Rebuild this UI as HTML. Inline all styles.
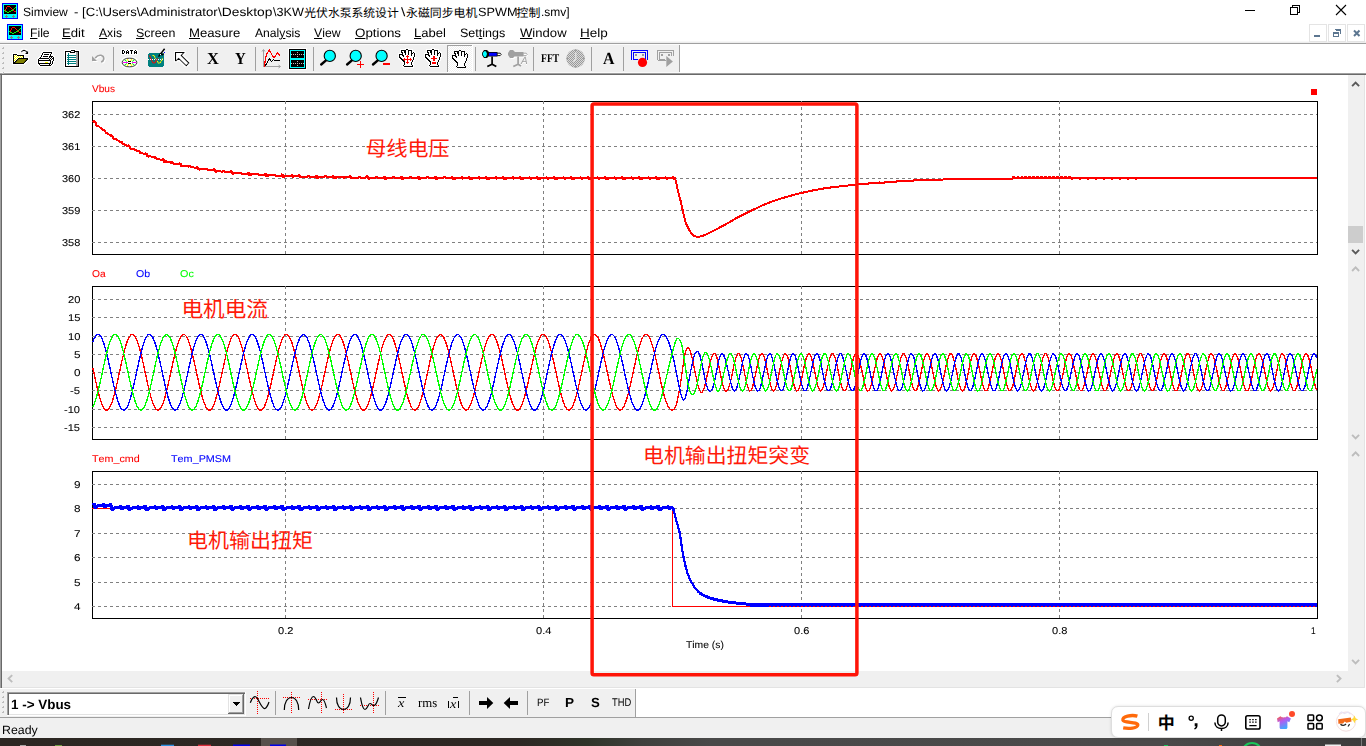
<!DOCTYPE html>
<html lang="en"><head><meta charset="utf-8"><title>Simview</title>
<style>
html,body{margin:0;padding:0;background:#fff;overflow:hidden}
body{width:1366px;height:746px;font-family:"Liberation Sans",sans-serif;font-kerning:none;text-rendering:geometricPrecision}
#app{position:relative;width:1366px;height:746px;overflow:hidden;background:#fff}
.b{position:absolute}
.t{position:absolute;white-space:pre;line-height:normal;transform-origin:0 0;font-kerning:none}
.t u{text-decoration:underline;text-underline-offset:1px;text-decoration-thickness:1px}
svg{position:absolute;left:0;top:0;overflow:visible}
.ic{position:absolute}
.ax{-webkit-text-stroke:.08px currentColor}
</style></head><body><div id="app">
<div class="b" id="titlebar" style="left:0;top:0;width:1366px;height:22px;background:#fff"></div>
<svg class="ic" style="left:2px;top:3px" width="16" height="16" viewBox="0 0 16 16" shape-rendering="crispEdges"><rect width="16" height="16" fill="#00f"/><rect x="1" y="1" width="14" height="14" fill="#0ff"/><rect x="2" y="2" width="12" height="9" fill="#000"/><path d="M3 6h1v2h-1zM4 4h1v2h-1zM5 3h3v1h-3zM8 4h1v1h-1zM9 5h1v1h-1zM10 6h1v1h-1zM11 7h1v1h-1zM12 8h2v1h-2z" fill="#f00"/><path d="M2 7h1v1h-1zM3 8h2v1h-2zM5 9h2v1h-2zM7 8h2v1h-2zM9 7h2v1h-2zM11 6h1v1h-1zM12 5h1v1h-1zM13 4h1v1h-1z" fill="#0f0"/><path d="M4 12h1v3h-1zM3 13h3v1h-3zM11 12h1v3h-1zM10 13h3v1h-3z" fill="#808080"/></svg>
<span class="t" style="left:23.15px;top:4.80px;font-size:12.0px;color:#000;transform:scaleX(1.0033)">Simview</span>
<span class="t" style="left:73.62px;top:4.80px;font-size:12.0px;color:#000;transform:scaleX(1.0923)">-</span>
<span class="t" style="left:82.26px;top:4.80px;font-size:12.0px;color:#000;transform:scaleX(1.0938)">[C:\Users\Administrator</span>
<span class="t" style="left:218.40px;top:4.80px;font-size:12.0px;color:#000;transform:scaleX(1.1483)">\Desktop</span>
<span class="t" style="left:272.90px;top:4.80px;font-size:12.0px;color:#000;transform:scaleX(1.0513)">\3KW</span>
<span class="t" style="left:400.60px;top:4.80px;font-size:12.0px;color:#000;transform:scaleX(1.2897)">\</span>
<span class="t" style="left:477.72px;top:4.80px;font-size:12.0px;color:#000;transform:scaleX(1.0586)">SPWM</span>
<span class="t" style="left:541.20px;top:4.80px;font-size:12.0px;color:#000;transform:scaleX(0.9995)">.smv]</span>
<svg width="1366" height="24" viewBox="0 0 1366 24"><text x="304.3" y="17" font-size="11.8" fill="#000" font-family="'Liberation Sans','Noto Sans CJK SC',sans-serif">光伏水泵系统设计</text><text x="406" y="17" font-size="11.9" fill="#000" font-family="'Liberation Sans','Noto Sans CJK SC',sans-serif">永磁同步电机</text><text x="516.5" y="17" font-size="11.9" fill="#000" font-family="'Liberation Sans','Noto Sans CJK SC',sans-serif">控制</text></svg>
<svg width="1366" height="22" viewBox="0 0 1366 22" fill="none" stroke="#000" stroke-width="1"><path d="M1245 10.5h10" shape-rendering="crispEdges"/><path d="M1290.5 7.5h7v7h-7zM1292.5 7.5v-2h7v7h-2" shape-rendering="crispEdges"/><path d="M1336 5l10 10M1346 5l-10 10" stroke-width="1.1"/></svg>
<div class="b" id="menubar" style="left:0;top:22px;width:1366px;height:21px;background:#fff"></div>
<div class="b" style="left:0px;top:41px;width:1366px;height:1px;background:#f7f7f7;"></div>
<div class="b" style="left:0px;top:42px;width:1366px;height:1px;background:#ededed;"></div>
<svg class="ic" style="left:7px;top:24px" width="16" height="16" viewBox="0 0 16 16" shape-rendering="crispEdges"><rect width="16" height="16" fill="#00f"/><rect x="1" y="1" width="14" height="14" fill="#0ff"/><rect x="2" y="2" width="12" height="9" fill="#000"/><path d="M3 6h1v2h-1zM4 4h1v2h-1zM5 3h3v1h-3zM8 4h1v1h-1zM9 5h1v1h-1zM10 6h1v1h-1zM11 7h1v1h-1zM12 8h2v1h-2z" fill="#f00"/><path d="M2 7h1v1h-1zM3 8h2v1h-2zM5 9h2v1h-2zM7 8h2v1h-2zM9 7h2v1h-2zM11 6h1v1h-1zM12 5h1v1h-1zM13 4h1v1h-1z" fill="#0f0"/><path d="M4 12h1v3h-1zM3 13h3v1h-3zM11 12h1v3h-1zM10 13h3v1h-3z" fill="#808080"/></svg>
<span class="t" style="left:29.50px;top:26.10px;font-size:12.2px;color:#000;transform:scaleX(0.9992)"><u>F</u>ile</span>
<span class="t" style="left:62.42px;top:26.10px;font-size:12.2px;color:#000;transform:scaleX(1.0787)"><u>E</u>dit</span>
<span class="t" style="left:98.98px;top:26.10px;font-size:12.2px;color:#000;transform:scaleX(0.9963)"><u>A</u>xis</span>
<span class="t" style="left:135.84px;top:26.10px;font-size:12.2px;color:#000;transform:scaleX(1.0185)"><u>S</u>creen</span>
<span class="t" style="left:188.52px;top:26.10px;font-size:12.2px;color:#000;transform:scaleX(1.0801)"><u>M</u>easure</span>
<span class="t" style="left:254.58px;top:26.10px;font-size:12.2px;color:#000;transform:scaleX(0.9964)">Anal<u>y</u>sis</span>
<span class="t" style="left:314.05px;top:26.10px;font-size:12.2px;color:#000;transform:scaleX(1.0030)"><u>V</u>iew</span>
<span class="t" style="left:354.77px;top:26.10px;font-size:12.2px;color:#000;transform:scaleX(1.0944)"><u>O</u>ptions</span>
<span class="t" style="left:414.43px;top:26.10px;font-size:12.2px;color:#000;transform:scaleX(1.0701)"><u>L</u>abel</span>
<span class="t" style="left:460.33px;top:26.10px;font-size:12.2px;color:#000;transform:scaleX(1.0281)">Set<u>t</u>ings</span>
<span class="t" style="left:519.84px;top:26.10px;font-size:12.2px;color:#000;transform:scaleX(1.0745)"><u>W</u>indow</span>
<span class="t" style="left:580.09px;top:26.10px;font-size:12.2px;color:#000;transform:scaleX(1.1070)"><u>H</u>elp</span>
<div class="b" style="left:1309px;top:24px;width:16px;height:16px;background:#fff;border:1px solid #e4e4e4"></div>
<div class="b" style="left:1328px;top:24px;width:16px;height:16px;background:#fff;border:1px solid #e4e4e4"></div>
<div class="b" style="left:1347px;top:24px;width:16px;height:16px;background:#fff;border:1px solid #e4e4e4"></div>
<svg width="1366" height="44" viewBox="0 0 1366 44" shape-rendering="crispEdges"><rect x="1314" y="35" width="6" height="2" fill="#5c7690"/><path d="M1335 29h6v5h-1v-3h-4v-1h-1zM1333 32h6v5h-6zM1334 34v2h4v-2z" fill="#5c7690" fill-rule="evenodd"/></svg>
<svg width="1366" height="44" viewBox="0 0 1366 44"><path d="M1354 30.5l5.5 5.5M1359.5 30.5l-5.5 5.5" stroke="#5c7690" stroke-width="2" fill="none"/></svg>
<div class="b" style="left:0px;top:43px;width:1366px;height:1px;background:#a0a0a0;"></div>
<div class="b" style="left:0px;top:44px;width:680px;height:29px;background:#f0f0f0;"></div>
<div class="b" style="left:0px;top:44px;width:680px;height:1px;background:#fbfbfb;"></div>
<div class="b" style="left:680px;top:44px;width:686px;height:29px;background:#fff;"></div>
<div class="b" style="left:679px;top:45px;width:1px;height:28px;background:#a0a0a0;"></div>
<div class="b" style="left:0px;top:72px;width:680px;height:1px;background:#fafafa;"></div>
<div class="b" style="left:0px;top:73px;width:1366px;height:1px;background:#a0a0a0;"></div>
<div class="b" style="left:0px;top:74px;width:1366px;height:1px;background:#696969;"></div>
<div class="b" style="left:0px;top:75px;width:1366px;height:613px;background:#fff;"></div>
<div class="b" style="left:0px;top:75px;width:1px;height:613px;background:#a0a0a0;"></div>
<div class="b" style="left:1px;top:75px;width:1px;height:613px;background:#696969;"></div>
<div class="b" style="left:1348px;top:75px;width:17px;height:613px;background:#f0f0f0;"></div>
<div class="b" style="left:2px;top:671px;width:1363px;height:17px;background:#f0f0f0;"></div>
<div class="b" style="left:2px;top:687px;width:1363px;height:1px;background:#e3e3e3;"></div>
<div class="b" style="left:1364px;top:75px;width:1px;height:613px;background:#e3e3e3;"></div>
<div class="b" style="left:1365px;top:75px;width:1px;height:613px;background:#fff;"></div>
<div class="b" style="left:1348px;top:226px;width:15px;height:17px;background:#cdcdcd;"></div>
<svg width="1366" height="746" viewBox="0 0 1366 746"><path d="M1352.1 86.2L1355.6 82.60000000000001L1359.1 86.2" stroke="#5a5a5a" stroke-width="1.9" fill="none"/><path d="M1352.1 249.9L1355.6 253.5L1359.1 249.9" stroke="#5a5a5a" stroke-width="1.9" fill="none"/><path d="M1352.1 271.0L1355.6 267.4L1359.1 271.0" stroke="#bdbdbd" stroke-width="1.9" fill="none"/><path d="M1352.1 434.9L1355.6 438.5L1359.1 434.9" stroke="#bdbdbd" stroke-width="1.9" fill="none"/><path d="M1352.1 456.0L1355.6 452.4L1359.1 456.0" stroke="#bdbdbd" stroke-width="1.9" fill="none"/><path d="M1352.1 659.9L1355.6 663.5L1359.1 659.9" stroke="#bdbdbd" stroke-width="1.9" fill="none"/><path d="M12.2 675.1L8.6 678.6L12.2 682.1" stroke="#bdbdbd" stroke-width="1.9" fill="none"/><path d="M1336.9 675.1L1340.5 678.6L1336.9 682.1" stroke="#bdbdbd" stroke-width="1.9" fill="none"/></svg>
<div class="b" style="left:0px;top:688px;width:1366px;height:29px;background:#fff;"></div>
<div class="b" style="left:0px;top:689px;width:636px;height:28px;background:#f0f0f0;"></div>
<div class="b" style="left:635px;top:689px;width:1px;height:28px;background:#a0a0a0;"></div>
<div class="b" style="left:0px;top:717px;width:1366px;height:1px;background:#a0a0a0;"></div>
<div class="b" style="left:0px;top:718px;width:1366px;height:20px;background:#f0f0f0;"></div>
<span class="t" style="left:2.19px;top:722.80px;font-size:12.0px;color:#000;transform:scaleX(1.0303)">Ready</span>
<div class="b" id="taskbar" style="left:0;top:738px;width:1366px;height:8px;background:linear-gradient(90deg,#2c2723 0,#2d2824 38%,#2f3429 43%,#3f403d 47%,#494949 52%,#4a4a4a 85%,#3c3c3c 100%)"></div>
<div class="b" style="left:261px;top:738px;width:36px;height:8px;background:#57514c;"></div>
<svg id="tbicons" width="700" height="75" viewBox="0 0 700 75">
<defs>
<pattern id="yd" width="2" height="2" patternUnits="userSpaceOnUse"><rect width="2" height="2" fill="#fff"/><rect width="1" height="1" fill="#ff0"/><rect x="1" y="1" width="1" height="1" fill="#ff0"/></pattern>
<pattern id="gd" width="2" height="2" patternUnits="userSpaceOnUse"><rect width="2" height="2" fill="#d8d8d8"/><rect width="1" height="1" fill="#9a9a9a"/><rect x="1" y="1" width="1" height="1" fill="#9a9a9a"/></pattern>
<pattern id="wd" width="2" height="2" patternUnits="userSpaceOnUse"><rect width="2" height="2" fill="#fff"/><rect width="1" height="1" fill="#f0f0f0"/><rect x="1" y="1" width="1" height="1" fill="#f0f0f0"/></pattern>
<pattern id="bd" width="2" height="2" patternUnits="userSpaceOnUse"><rect width="2" height="2" fill="#fff"/><rect width="1" height="1" fill="#000"/><rect x="1" y="1" width="1" height="1" fill="#000"/></pattern>
<filter id="halo" x="-20%" y="-20%" width="140%" height="140%"><feMorphology in="SourceAlpha" operator="dilate" radius="1" result="d"/><feFlood flood-color="#fff" flood-opacity="0.95"/><feComposite in2="d" operator="in" result="h"/><feMerge><feMergeNode in="h"/><feMergeNode in="SourceGraphic"/></feMerge></filter>
<g id="hand" shape-rendering="crispEdges"><path d="M7 0h2v1h-2zM2 1h11v1h-11zM2 2h11v1h-11zM2 3h13v1h-13zM3 4h13v1h-13zM0 5h16v1h-16zM0 6h16v1h-16zM0 7h16v1h-16zM0 8h15v1h-15zM1 9h14v1h-14zM2 10h13v1h-13zM3 11h11v1h-11zM4 12h10v1h-10zM5 13h8v1h-8zM5 14h8v1h-8zM5 15h8v1h-8zM4 16h10v1h-10zM5 17h9v1h-9z" fill="#fff"/><path d="M7 0h2v1h-2zM2 1h5v1h-5zM9 1h4v1h-4zM2 2h1v1h-1zM5 2h2v1h-2zM9 2h1v1h-1zM12 2h1v1h-1zM2 3h2v1h-2zM5 3h2v1h-2zM9 3h1v1h-1zM12 3h1v1h-1zM14 3h1v1h-1zM3 4h1v1h-1zM6 4h1v1h-1zM9 4h1v1h-1zM12 4h2v1h-2zM15 4h1v1h-1zM0 5h4v1h-4zM6 5h1v1h-1zM9 5h1v1h-1zM12 5h1v1h-1zM15 5h1v1h-1zM0 6h1v1h-1zM3 6h2v1h-2zM12 6h1v1h-1zM15 6h1v1h-1zM0 7h1v1h-1zM4 7h1v1h-1zM15 7h1v1h-1zM0 8h2v1h-2zM14 8h1v1h-1zM1 9h2v1h-2zM14 9h1v1h-1zM2 10h2v1h-2zM14 10h1v1h-1zM3 11h2v1h-2zM13 11h1v1h-1zM4 12h2v1h-2zM13 12h1v1h-1zM5 13h1v1h-1zM12 13h1v1h-1zM5 14h1v1h-1zM12 14h1v1h-1zM5 15h1v1h-1zM12 15h1v1h-1zM4 16h1v1h-1zM13 16h1v1h-1zM5 17h9v1h-9z" fill="#000"/></g>
<g id="mag">
<path d="M-3.5 4.2L-8.6 8.6" stroke="#000" stroke-width="2.4" stroke-linecap="round"/>
<circle cx="0" cy="0" r="5.6" fill="#0ff" stroke="#000" stroke-width="1.1"/>
</g>
</defs>
<path d="M2 48h1v1h-1zM3 47h1v1h-1zM3 48h1v1h-1z" fill="#bcbcbc" shape-rendering="crispEdges"/>
<path d="M2 53h1v1h-1zM3 52h1v1h-1zM3 53h1v1h-1z" fill="#bcbcbc" shape-rendering="crispEdges"/>
<path d="M2 58h1v1h-1zM3 57h1v1h-1zM3 58h1v1h-1z" fill="#bcbcbc" shape-rendering="crispEdges"/>
<path d="M2 63h1v1h-1zM3 62h1v1h-1zM3 63h1v1h-1z" fill="#bcbcbc" shape-rendering="crispEdges"/>
<path d="M2 68h1v1h-1zM3 67h1v1h-1zM3 68h1v1h-1z" fill="#bcbcbc" shape-rendering="crispEdges"/>
<path d="M2 73h1v1h-1zM3 72h1v1h-1zM3 73h1v1h-1z" fill="#bcbcbc" shape-rendering="crispEdges"/>
<rect x="113" y="47" width="1" height="24" fill="#a0a0a0" shape-rendering="crispEdges"/>
<rect x="197" y="47" width="1" height="24" fill="#a0a0a0" shape-rendering="crispEdges"/>
<rect x="255" y="47" width="1" height="24" fill="#a0a0a0" shape-rendering="crispEdges"/>
<rect x="313" y="47" width="1" height="24" fill="#a0a0a0" shape-rendering="crispEdges"/>
<rect x="475" y="47" width="1" height="24" fill="#a0a0a0" shape-rendering="crispEdges"/>
<rect x="533" y="47" width="1" height="24" fill="#a0a0a0" shape-rendering="crispEdges"/>
<rect x="591" y="47" width="1" height="24" fill="#a0a0a0" shape-rendering="crispEdges"/>
<rect x="623" y="47" width="1" height="24" fill="#a0a0a0" shape-rendering="crispEdges"/>
<g filter="url(#halo)" shape-rendering="crispEdges">
<path d="M13 54h4v1h7v3h4v1l-4 5h-11z" fill="#000"/>
<path d="M14 55h3v1h6v2h-5l-4 5z" fill="url(#yd)"/>
<path d="M18.6 59h8.2l-3.3 4h-8.4z" fill="#808000" shape-rendering="geometricPrecision"/>
<path d="M21.300 52.100q2.300-3 5-.6l.9 1" stroke="#000" stroke-width="1.300" fill="none" shape-rendering="geometricPrecision"/>
<path d="M24.800 54h3.400v-3.400z" fill="#000" shape-rendering="geometricPrecision"/>
</g>
<g filter="url(#halo)" shape-rendering="crispEdges"><path d="M43 52h9v1h-9zM42 53h10v1h-10zM42 54h9v1h-9zM41 55h10v1h-10zM41 56h12v1h-12zM40 57h14v1h-14zM39 58h15v1h-15zM38 59h16v1h-16zM38 60h16v1h-16zM38 61h15v1h-15zM38 62h15v1h-15zM38 63h15v1h-15zM39 64h13v1h-13zM40 65h11v1h-11z" fill="#fff"/><path d="M43 52h9v1h-9zM42 53h1v1h-1zM51 53h1v1h-1zM42 54h1v1h-1zM44 54h5v1h-5zM50 54h1v1h-1zM41 55h1v1h-1zM50 55h1v1h-1zM41 56h1v1h-1zM43 56h5v1h-5zM49 56h4v1h-4zM40 57h1v1h-1zM49 57h1v1h-1zM51 57h1v1h-1zM53 57h1v1h-1zM39 58h10v1h-10zM50 58h1v1h-1zM52 58h2v1h-2zM38 59h1v1h-1zM49 59h1v1h-1zM51 59h1v1h-1zM53 59h1v1h-1zM38 60h13v1h-13zM53 60h1v1h-1zM38 61h1v1h-1zM50 61h1v1h-1zM52 61h1v1h-1zM38 62h1v1h-1zM50 62h1v1h-1zM52 62h1v1h-1zM38 63h13v1h-13zM52 63h1v1h-1zM39 64h1v1h-1zM49 64h1v1h-1zM51 64h1v1h-1zM40 65h11v1h-11z" fill="#000"/><path d="M45 62h3v1h-3z" fill="#ff0"/></g>
<g filter="url(#halo)" shape-rendering="crispEdges">
<path d="M65 51h5l1-1h3l1 1h4v16h-14z" fill="#000"/>
<path d="M66 52h11v14h-11z" fill="#fff"/>
<path d="M70 51h5v2h-5z" fill="#000"/><path d="M71 51h3v1h-3z" fill="#fff"/>
<path d="M76 52h2v14h-2z" fill="#a0a0a0"/>
<path d="M68 53h1v12h-1zM67 55h9v1h-9zM67 57h9v1h-9zM67 59h9v1h-9zM67 61h9v1h-9zM67 63h9v1h-9z" fill="#008080"/>
</g>
<g>
<g transform="translate(1 1)"><path d="M92 56v5h5z" fill="#fff"/><path d="M95.200 58q2.600-3.200 5.800-2.700q3 .8 2.800 3.700q-.4 2.300-2.700 3" fill="none" stroke="#fff" stroke-width="1.600"/></g>
<path d="M92 56v5h5z" fill="#a0a0a0"/>
<path d="M95.200 58q2.600-3.200 5.800-2.700q3 .8 2.800 3.700q-.4 2.300-2.700 3" fill="none" stroke="#a0a0a0" stroke-width="1.600"/>
</g>
<g filter="url(#halo)" shape-rendering="crispEdges">
<path d="M122 50h2v1h1v2h-1v1h-2zM123 51v2h1v-2z" fill="#000" fill-rule="evenodd"/>
<path d="M126 51h1v-1h1v1h1v3h-1v-1h-1v1h-1zM127 51v1h1v-1z" fill="#000" fill-rule="evenodd"/>
<path d="M130 50h3v1h-1v3h-1v-3h-1z" fill="#000"/>
<path d="M134 51h1v-1h1v1h1v3h-1v-1h-1v1h-1zM135 51v1h1v-1z" fill="#000" fill-rule="evenodd"/>
<ellipse cx="129.5" cy="62.5" rx="7.5" ry="4.5" fill="#fff" stroke="#000" stroke-width="1" shape-rendering="geometricPrecision"/>
<path d="M123 62h4.500v1h-4.500zM131.500 62h4.500v1h-4.500z" fill="#f0f"/>
<path d="M124.500 60l2.500 1.500M134.500 60l-2.500 1.500M124.500 65l2.500-1.500M134.500 65l-2.500-1.500" stroke="#0f0" stroke-width="1" shape-rendering="geometricPrecision"/>
<path d="M127 59l1.500 2M132 59l-1.500 2M127 66l1.500-2M132 66l-1.500-2" stroke="#ff0" stroke-width="1.2" shape-rendering="geometricPrecision"/>
<path d="M128 61h3v1h-3zM128 63h3v1h-3z" fill="#000"/>
</g>
<g shape-rendering="crispEdges">
<path d="M149 53h14v1h1v12h-1v1h-14v-1h-1v-12h1z" fill="#008080"/>
<path d="M148 59h1v1h-1zM150 59h1v1h-1zM152 59h1v1h-1zM154 59h1v1h-1zM156 59h1v1h-1zM158 59h1v1h-1zM160 59h1v1h-1zM162 59h1v1h-1z" fill="#fff"/>
<path d="M149.500 55.500L151.500 60L153 63h2l1.500-3l1-1.800" stroke="#f00" stroke-width="1.100" fill="none" stroke-dasharray="1.600 .5" shape-rendering="geometricPrecision"/>
<path d="M152.500 55.500h1.500l1.600 3.200M157.300 61l1 2h1.800l2.600-4.500" stroke="#ff0" stroke-width="1.100" fill="none" stroke-dasharray="1.600 .5" shape-rendering="geometricPrecision"/>
<path d="M158.500 56.600L164.600 48.800" stroke="#000" stroke-width="1.500" shape-rendering="geometricPrecision"/>
<path d="M160 53.300l2.200 1.600l1.600-1.400" stroke="#000" stroke-width="1.200" fill="none" shape-rendering="geometricPrecision"/>
<rect x="160" y="54" width="1" height="1" fill="#fff"/><rect x="164" y="52" width="1" height="1" fill="#00f"/>
</g>
<g filter="url(#halo)"><path d="M175.500 52.500H184L181.300 55.500L189 63L186.200 65.800L178.600 58.400L176.200 60.800H175.500Z" fill="#fff" stroke="#000" stroke-width="1.100" stroke-linejoin="miter"/></g>
<g>
<path d="M263.500 67V50M262 51.500l1.500-2l1.500 2" stroke="#a0a0a0" stroke-width="1" fill="none"/>
<path d="M263 66.500H280M278.500 65l2 1.500l-2 1.500" stroke="#a0a0a0" stroke-width="1" fill="none"/>
<path d="M264.400 66.500L265.400 59.300L266.400 55.100L267.500 52.500L269.400 50.300L271.500 54L272.500 56.200L273.800 57.400L275.500 55.700L277.400 53.200L279.700 55.500" stroke="#f00" stroke-width="1.200" fill="none" shape-rendering="crispEdges"/>
<path d="M265.200 65.800L267.500 62L269.400 58.400L271.300 61.600L273.600 59.300L274.400 60.500H280" stroke="#000" stroke-width="1.100" fill="none" shape-rendering="crispEdges"/>
</g>
<g shape-rendering="crispEdges">
<rect x="288" y="48" width="19" height="22" fill="#fff"/>
<rect x="289" y="49" width="17" height="20" fill="#000"/><rect x="290" y="50" width="15" height="18" fill="#0ff"/>
<rect x="291" y="51" width="13" height="7" fill="#000"/><rect x="291" y="60" width="13" height="7" fill="#000"/>
<g fill="#c8b4b4"><rect x="291" y="54" width="1" height="1"/><rect x="293" y="54" width="1" height="1"/><rect x="295" y="54" width="1" height="1"/><rect x="297" y="54" width="1" height="1"/><rect x="299" y="54" width="1" height="1"/><rect x="301" y="54" width="1" height="1"/><rect x="303" y="54" width="1" height="1"/><rect x="291" y="63" width="1" height="1"/><rect x="293" y="63" width="1" height="1"/><rect x="295" y="63" width="1" height="1"/><rect x="297" y="63" width="1" height="1"/><rect x="299" y="63" width="1" height="1"/><rect x="301" y="63" width="1" height="1"/><rect x="303" y="63" width="1" height="1"/><rect x="297" y="52" width="1" height="1"/><rect x="297" y="56" width="1" height="1"/><rect x="297" y="61" width="1" height="1"/><rect x="297" y="65" width="1" height="1"/></g></g>
<use href="#mag" x="329.800" y="55.900"/><use href="#mag" x="355.700" y="55.900"/><use href="#mag" x="381.600" y="55.900"/>
<path d="M357 64h7v1h-7zM360 61h1v7h-1z" fill="#f00" shape-rendering="crispEdges"/>
<rect x="383" y="63" width="7" height="2" fill="#f00" shape-rendering="crispEdges"/>
<g filter="url(#halo)"><use href="#hand" x="399" y="49"/><use href="#hand" x="425" y="49"/></g>
<path d="M403.500 59.500h8M407.500 55.500v8M406 57l1.500-1.500l1.500 1.500M406 62l1.500 1.500l1.500-1.500M405 58l-1.500 1.500l1.500 1.500M410 58l1.500 1.500l-1.500 1.500" stroke="#f00" stroke-width="1" fill="none"/>
<path d="M431 58h6v1h-6zM433 56h2v5h-2zM432 62h4v2h-4z" fill="#f00" shape-rendering="crispEdges"/>
<g shape-rendering="crispEdges"><rect x="447" y="45" width="26" height="28" fill="#fff"/><rect x="447" y="45" width="25" height="27" fill="#a0a0a0"/>
<rect x="448" y="46" width="24" height="26" fill="url(#wd)"/></g>
<use href="#hand" x="452" y="50"/>
<g id="tele">
<path d="M484 50h3l2 2v4l-2 2h-3l-2-3v-2z" fill="#000"/>
<path d="M484.200 51.200l1.600 .1l1 2v1.500l-1 2.200h-1.600l-1.400-2.500v-1.500z" fill="#0ff"/>
<path d="M488.500 52h9v4.500h-9z" fill="#000"/><rect x="489" y="52.800" width="8" height="3" fill="#00f"/>
<path d="M497.200 53.200h3l1 1.200l-1 1.200h-3z" fill="#fff" stroke="#000" stroke-width=".9"/>
<path d="M492.100 56.500V64.500M492.100 64.300L487.300 66.600M492.100 64.300L496.300 66.600" stroke="#000" stroke-width="1.700" fill="none"/>
</g>
<g>
<g transform="translate(1 1)" opacity=".9"><path d="M510 50h3l2 2v4l-2 2h-3l-2-3v-2zM514.500 52h9v4.500h-9zM523.200 53.200h3l1 1.200l-1 1.200h-3z" fill="#fff"/></g>
<path d="M510 50h3l2 2v4l-2 2h-3l-2-3v-2z" fill="#a0a0a0"/>
<path d="M514.500 52h9v4.500h-9z" fill="#a0a0a0"/>
<path d="M523.200 53.200h3l1 1.200l-1 1.200h-3z" fill="#fff" stroke="#a0a0a0" stroke-width=".9"/>
<path d="M518.100 56.500V64.500M518.100 64.300L513.300 66.600M518.100 64.300L521 66" stroke="#a0a0a0" stroke-width="1.700" fill="none"/>
</g>
</svg>
<span class="t" style="left:207.49px;top:49.20px;font-size:17px;color:#000;transform:scaleX(0.9692);font-family:'Liberation Serif',serif;font-weight:bold">X</span>
<span class="t" style="left:234.74px;top:49.20px;font-size:17px;color:#000;transform:scaleX(0.8752);font-family:'Liberation Serif',serif;font-weight:bold">Y</span>
<span class="t" style="left:602.84px;top:49.20px;font-size:17px;color:#000;transform:scaleX(0.9344);font-family:'Liberation Serif',serif;font-weight:bold">A</span>
<span class="t" style="left:540.84px;top:51.00px;font-size:12px;color:#000;transform:scaleX(0.8035);font-family:'Liberation Serif',serif;font-weight:bold">FFT</span>
<span class="t" style="left:521.49px;top:56.00px;font-size:10.5px;color:#fff;transform:scaleX(0.9486);font-style:italic">A</span>
<span class="t" style="left:520.69px;top:55.20px;font-size:10.5px;color:#a0a0a0;transform:scaleX(0.9486);font-style:italic">A</span>
<svg width="700" height="75" viewBox="0 0 700 75">
<circle cx="575.600" cy="58.500" r="9.300" fill="url(#gd)"/>
<path d="M575.800 52.500v6.300l-2.400 2.800" stroke="#e6e6e6" stroke-width="1.200" fill="none"/>
<path d="M574.300 49.600h2.600l-1.300 2zM574.300 67.400h2.600l-1.300-2zM566.700 57.200v2.600l2-1.300zM584.500 57.200v2.600l-2-1.300z" fill="#a0a0a0"/>
<g shape-rendering="crispEdges" fill="none" stroke="#00f" stroke-width="1">
<path d="M631.500 60V50.500H647.500V60"/><path d="M638 59.500H633.500V52.500H645.500V59.500H644"/>
<rect x="635" y="54" width="2" height="2" fill="#9a9a9a" stroke="none"/><rect x="642" y="54" width="2" height="2" fill="#9a9a9a" stroke="none"/>
</g>
<circle cx="642.500" cy="62.400" r="4.600" fill="#f00"/>
<g shape-rendering="crispEdges" fill="none" stroke="#a0a0a0" stroke-width="1">
<path d="M657.500 60V50.500H673.500V56"/><path d="M665 59.500H659.500V52.500H671.500V56"/><path d="M657.500 60.500H666"/>
<rect x="661" y="54" width="2" height="2" fill="#a0a0a0" stroke="none"/><rect x="668" y="54" width="2" height="2" fill="#a0a0a0" stroke="none"/>
</g>
<path d="M666.300 55.900L672.900 61.400L666.300 67z" fill="#a0a0a0"/>
</svg>
<svg id="plots" width="1366" height="746" viewBox="0 0 1366 746">
<rect x="92.500" y="101.500" width="1225" height="153" fill="none" stroke="#000" stroke-width="1" shape-rendering="crispEdges"/>
<rect x="92.500" y="286.500" width="1225" height="153" fill="none" stroke="#000" stroke-width="1" shape-rendering="crispEdges"/>
<rect x="92.500" y="471.500" width="1225" height="147" fill="none" stroke="#000" stroke-width="1" shape-rendering="crispEdges"/>
<path d="M92 114.500H1317" stroke="#808080" stroke-width="1" stroke-dasharray="3 3" shape-rendering="crispEdges"/>
<path d="M92 146.500H1317" stroke="#808080" stroke-width="1" stroke-dasharray="3 3" shape-rendering="crispEdges"/>
<path d="M92 178.500H1317" stroke="#808080" stroke-width="1" stroke-dasharray="3 3" shape-rendering="crispEdges"/>
<path d="M92 210.500H1317" stroke="#808080" stroke-width="1" stroke-dasharray="3 3" shape-rendering="crispEdges"/>
<path d="M92 242.500H1317" stroke="#808080" stroke-width="1" stroke-dasharray="3 3" shape-rendering="crispEdges"/>
<path d="M285.500 101V254" stroke="#808080" stroke-width="1" stroke-dasharray="3 3" shape-rendering="crispEdges"/>
<path d="M543.500 101V254" stroke="#808080" stroke-width="1" stroke-dasharray="3 3" shape-rendering="crispEdges"/>
<path d="M801.500 101V254" stroke="#808080" stroke-width="1" stroke-dasharray="3 3" shape-rendering="crispEdges"/>
<path d="M1059.500 101V254" stroke="#808080" stroke-width="1" stroke-dasharray="3 3" shape-rendering="crispEdges"/>
<path d="M92 299.500H1317" stroke="#808080" stroke-width="1" stroke-dasharray="3 3" shape-rendering="crispEdges"/>
<path d="M92 317.500H1317" stroke="#808080" stroke-width="1" stroke-dasharray="3 3" shape-rendering="crispEdges"/>
<path d="M92 336.500H1317" stroke="#808080" stroke-width="1" stroke-dasharray="3 3" shape-rendering="crispEdges"/>
<path d="M92 354.500H1317" stroke="#808080" stroke-width="1" stroke-dasharray="3 3" shape-rendering="crispEdges"/>
<path d="M92 372.500H1317" stroke="#808080" stroke-width="1" stroke-dasharray="3 3" shape-rendering="crispEdges"/>
<path d="M92 390.500H1317" stroke="#808080" stroke-width="1" stroke-dasharray="3 3" shape-rendering="crispEdges"/>
<path d="M92 409.500H1317" stroke="#808080" stroke-width="1" stroke-dasharray="3 3" shape-rendering="crispEdges"/>
<path d="M92 427.500H1317" stroke="#808080" stroke-width="1" stroke-dasharray="3 3" shape-rendering="crispEdges"/>
<path d="M285.500 286V439" stroke="#808080" stroke-width="1" stroke-dasharray="3 3" shape-rendering="crispEdges"/>
<path d="M543.500 286V439" stroke="#808080" stroke-width="1" stroke-dasharray="3 3" shape-rendering="crispEdges"/>
<path d="M801.500 286V439" stroke="#808080" stroke-width="1" stroke-dasharray="3 3" shape-rendering="crispEdges"/>
<path d="M1059.500 286V439" stroke="#808080" stroke-width="1" stroke-dasharray="3 3" shape-rendering="crispEdges"/>
<path d="M92 484.500H1317" stroke="#808080" stroke-width="1" stroke-dasharray="3 3" shape-rendering="crispEdges"/>
<path d="M92 508.500H1317" stroke="#808080" stroke-width="1" stroke-dasharray="3 3" shape-rendering="crispEdges"/>
<path d="M92 533.500H1317" stroke="#808080" stroke-width="1" stroke-dasharray="3 3" shape-rendering="crispEdges"/>
<path d="M92 557.500H1317" stroke="#808080" stroke-width="1" stroke-dasharray="3 3" shape-rendering="crispEdges"/>
<path d="M92 582.500H1317" stroke="#808080" stroke-width="1" stroke-dasharray="3 3" shape-rendering="crispEdges"/>
<path d="M92 606.500H1317" stroke="#808080" stroke-width="1" stroke-dasharray="3 3" shape-rendering="crispEdges"/>
<path d="M285.500 471V618" stroke="#808080" stroke-width="1" stroke-dasharray="3 3" shape-rendering="crispEdges"/>
<path d="M543.500 471V618" stroke="#808080" stroke-width="1" stroke-dasharray="3 3" shape-rendering="crispEdges"/>
<path d="M801.500 471V618" stroke="#808080" stroke-width="1" stroke-dasharray="3 3" shape-rendering="crispEdges"/>
<path d="M1059.500 471V618" stroke="#808080" stroke-width="1" stroke-dasharray="3 3" shape-rendering="crispEdges"/>
<polyline points="92.600,120.800 93.100,121.300 93.600,121.700 94.100,122.200 94.600,121.500 95.100,121.900 95.600,122.400 96.100,125 96.600,125.500 97.100,125.900 97.600,126.400 98.100,125.800 98.600,126.200 99.100,126.700 99.600,127.100 100.100,127.500 100.600,127.900 101.100,128.400 101.600,128.800 102.100,129.200 102.600,129.600 103.100,130 103.600,130.400 104.100,130 104.600,130.400 105.100,130.800 105.600,132.500 106.100,132.800 106.600,132.700 107.100,133.100 107.600,133.500 108.100,133.900 108.600,134.200 109.100,134.600 109.600,134.900 110.100,135.300 110.600,135.700 111.100,136 111.600,135.200 112.100,135.500 112.600,135.900 113.100,138.400 113.600,138.700 114.100,139.100 114.600,139.400 115.100,138.700 115.600,139.100 116.100,139.400 116.600,139.700 117.100,140 117.600,140.300 118.100,140.700 118.600,141 119.100,141.300 119.600,141.600 120.100,141.900 120.600,142.200 121.100,141.700 121.600,142 122.100,142.300 122.600,143.900 123.100,144.200 123.600,143.900 124.100,144.200 124.600,144.500 125.100,144.800 125.600,145.100 126.100,145.300 126.600,145.600 127.100,145.900 127.600,146.200 128.100,146.400 128.600,145.500 129.100,145.700 129.600,146 130.100,148.500 130.600,148.700 131.100,149 131.600,149.200 132.100,148.500 132.600,148.700 133.100,149 133.600,149.200 134.100,149.400 134.600,149.700 135.100,149.900 135.600,150.200 136.100,150.400 136.600,150.600 137.100,150.800 137.600,151.100 138.100,150.500 138.600,150.700 139.100,150.900 139.600,152.500 140.100,152.700 140.600,152.400 141.100,152.600 141.600,152.800 142.100,153 142.600,153.200 143.100,153.500 143.600,153.700 144.100,153.900 144.600,154.100 145.100,154.300 145.600,153.300 146.100,153.500 146.600,153.700 147.100,156 147.600,156.200 148.100,156.400 148.600,156.600 149.100,155.800 149.600,156 150.100,156.200 150.600,156.400 151.100,156.500 151.600,156.700 152.100,156.900 152.600,157.100 153.100,157.300 153.600,157.400 154.100,157.600 154.600,157.800 155.100,157.100 155.600,157.300 156.100,157.500 156.600,158.900 157.100,159.100 157.600,158.800 158.100,158.900 158.600,159.100 159.100,159.200 159.600,159.400 160.100,159.600 160.600,159.700 161.100,159.900 161.600,160 162.100,160.200 162.600,159.100 163.100,159.300 163.600,159.400 164.100,161.800 164.600,161.900 165.100,162 165.600,162.200 166.100,161.300 166.600,161.500 167.100,161.600 167.600,161.700 168.100,161.900 168.600,162 169.100,162.200 169.600,162.300 170.100,162.400 170.600,162.600 171.100,162.700 171.600,162.800 172.100,162.100 172.600,162.300 173.100,162.400 173.600,163.800 174.100,163.900 174.600,163.600 175.100,163.700 175.600,163.800 176.100,163.900 176.600,164 177.100,164.200 177.600,164.300 178.100,164.400 178.600,164.500 179.100,164.600 179.600,163.500 180.100,163.600 180.600,163.800 181.100,166.100 181.600,166.200 182.100,166.300 182.600,166.400 183.100,165.500 183.600,165.600 184.100,165.700 184.600,165.800 185.100,165.900 185.600,166 186.100,166.100 186.600,166.200 187.100,166.300 187.600,166.400 188.100,166.500 188.600,166.600 189.100,165.900 189.600,166 190.100,166.100 190.600,167.500 191.100,167.600 191.600,167.200 192.100,167.300 192.600,167.400 193.100,167.400 193.600,167.500 194.100,167.600 194.600,167.700 195.100,167.800 195.600,167.900 196.100,168 196.600,166.900 197.100,166.900 197.600,167 198.100,169.300 198.600,169.400 199.100,169.500 199.600,169.500 200.100,168.600 200.600,168.700 201.100,168.800 201.600,168.900 202.100,168.900 202.600,169 203.100,169.100 203.600,169.200 204.100,169.200 204.600,169.300 205.100,169.400 205.600,169.500 206.100,168.700 206.600,168.800 207.100,168.900 207.600,170.300 208.100,170.300 208.600,169.900 209.100,170 209.600,170 210.100,170.100 210.600,170.200 211.100,170.200 211.600,170.300 212.100,170.400 212.600,170.400 213.100,170.500 213.600,169.400 214.100,169.400 214.600,169.500 215.100,171.700 215.600,171.800 216.100,171.900 216.600,171.900 217.100,171 217.600,171.100 218.100,171.100 218.600,171.200 219.100,171.200 219.600,171.300 220.100,171.300 220.600,171.400 221.100,171.500 221.600,171.500 222.100,171.600 222.600,171.600 223.100,170.900 223.600,170.900 224.100,171 224.600,172.300 225.100,172.400 225.600,171.900 226.100,172 226.600,172 227.100,172.100 227.600,172.100 228.100,172.200 228.600,172.200 229.100,172.300 229.600,172.300 230.100,172.400 230.600,171.200 231.100,171.300 231.600,171.300 232.100,173.600 232.600,173.600 233.100,173.700 233.600,173.700 234.100,172.800 234.600,172.800 235.100,172.900 235.600,172.900 236.100,172.900 236.600,173 237.100,173 237.600,173.100 238.100,173.100 238.600,173.200 239.100,173.200 239.600,173.200 240.100,172.500 240.600,172.500 241.100,172.600 241.600,173.900 242.100,173.900 242.600,173.500 243.100,173.500 243.600,173.600 244.100,173.600 244.600,173.600 245.100,173.700 245.600,173.700 246.100,173.800 246.600,173.800 247.100,173.800 247.600,172.700 248.100,172.700 248.600,172.700 249.100,175 249.600,175 250.100,175 250.600,175.100 251.100,174.100 251.600,174.100 252.100,174.200 252.600,174.200 253.100,174.200 253.600,174.300 254.100,174.300 254.600,174.300 255.100,174.400 255.600,174.400 256.100,174.400 256.600,174.500 257.100,173.700 257.600,173.700 258.100,173.800 258.600,175.100 259.100,175.100 259.600,174.600 260.100,174.700 260.600,174.700 261.100,174.700 261.600,174.800 262.100,174.800 262.600,174.800 263.100,174.900 263.600,174.900 264.100,174.900 264.600,173.700 265.100,173.800 265.600,173.800 266.100,176 266.600,176 267.100,176.100 267.600,176.100 268.100,175.100 268.600,175.100 269.100,175.200 269.600,175.200 270.100,175.200 270.600,175.200 271.100,175.300 271.600,175.300 272.100,175.300 272.600,175.300 273.100,175.400 273.600,175.400 274.100,174.600 274.600,174.600 275.100,174.700 275.600,176 276.100,176 276.600,175.500 277.100,175.500 277.600,175.600 278.100,175.600 278.600,175.600 279.100,175.600 279.600,175.700 280.100,175.700 280.600,175.700 281.100,175.700 281.600,174.500 282.100,174.600 282.600,174.600 283.100,176.800 283.600,176.800 284.100,176.800 284.600,176.900 285.100,175.900 285.600,175.900 286.100,175.900 286.600,175.900 287.100,176 287.600,176 288.100,176 288.600,176 289.100,176 289.600,176 290.100,176.100 290.600,176.100 291.100,175.300 291.600,175.300 292.100,175.300 292.600,176.700 293.100,176.700 293.600,176.200 294.100,176.200 294.600,176.200 295.100,176.200 295.600,176.300 296.100,176.300 296.600,176.300 297.100,176.300 297.600,176.300 298.100,176.300 298.600,175.100 299.100,175.200 299.600,175.200 300.100,177.400 300.600,177.400 301.100,177.400 301.600,177.400 302.100,176.500 302.600,176.500 303.100,176.500 303.600,176.500 304.100,176.500 304.600,176.500 305.100,176.500 305.600,176.600 306.100,176.600 306.600,176.600 307.100,176.600 307.600,176.600 308.100,175.800 308.600,175.800 309.100,175.800 309.600,177.200 310.100,177.200 310.600,176.700 311.100,176.700 311.600,176.700 312.100,176.700 312.600,176.700 313.100,176.700 313.600,176.800 314.100,176.800 314.600,176.800 315.100,176.800 315.600,175.600 316.100,175.600 316.600,175.600 317.100,177.800 317.600,177.800 318.100,177.900 318.600,177.900 319.100,176.900 319.600,176.900 320.100,176.900 320.600,176.900 321.100,176.900 321.600,176.900 322.100,176.900 322.600,177 323.100,177 323.600,177 324.100,177 324.600,177 325.100,176.200 325.600,176.200 326.100,176.200 326.600,177.500 327.100,177.500 327.600,177.100 328.100,177.100 328.600,177.100 329.100,177.100 329.600,177.100 330.100,177.100 330.600,177.100 331.100,177.100 331.600,177.100 332.100,177.100 332.600,175.900 333.100,176 333.600,176 334.100,178.200 334.600,178.200 335.100,178.200 335.600,178.200 336.100,177.200 336.600,177.200 337.100,177.200 337.600,177.200 338.100,177.200 338.600,177.200 339.100,177.300 339.600,177.300 340.100,177.300 340.600,177.300 341.100,177.300 341.600,177.300 342.100,176.500 342.600,176.500 343.100,176.500 343.600,177.800 344.100,177.800 344.600,177.300 345.100,177.300 345.600,177.400 346.100,177.400 346.600,177.400 347.100,177.400 347.600,177.400 348.100,177.400 348.600,177.400 349.100,177.400 349.600,176.200 350.100,176.200 350.600,176.200 351.100,178.400 351.600,178.400 352.100,178.400 352.600,178.400 353.100,177.500 353.600,177.500 354.100,177.500 354.600,177.500 355.100,177.500 355.600,177.500 356.100,177.500 356.600,177.500 357.100,177.500 357.600,177.500 358.100,177.500 358.600,177.500 359.100,176.700 359.600,176.700 360.100,176.700 360.600,178 361.100,178 361.600,177.600 362.100,177.600 362.600,177.600 363.100,177.600 363.600,177.600 364.100,177.600 364.600,177.600 365.100,177.600 365.600,177.600 366.100,177.600 366.600,176.400 367.100,176.400 367.600,176.400 368.100,178.600 368.600,178.600 369.100,178.600 369.600,178.600 370.100,177.600 370.600,177.600 371.100,177.600 371.600,177.700 372.100,177.700 372.600,177.700 373.100,177.700 373.600,177.700 374.100,177.700 374.600,177.700 375.100,177.700 375.600,177.700 376.100,176.900 376.600,176.900 377.100,176.900 377.600,178.200 378.100,178.200 378.600,177.700 379.100,177.700 379.600,177.700 380.100,177.700 380.600,177.700 381.100,177.700 381.600,177.700 382.100,177.700 382.600,177.700 383.100,177.700 383.600,176.600 384.100,176.600 384.600,176.600 385.100,178.800 385.600,178.800 386.100,178.800 386.600,178.800 387.100,177.800 387.600,177.800 388.100,177.800 388.600,177.800 389.100,177.800 389.600,177.800 390.100,177.800 390.600,177.800 391.100,177.800 391.600,177.800 392.100,177.800 392.600,177.800 393.100,177 393.600,177 394.100,177 394.600,178.300 395.100,178.300 395.600,177.800 396.100,177.800 396.600,177.800 397.100,177.800 397.600,177.800 398.100,177.800 398.600,177.800 399.100,177.900 399.600,177.900 400.100,177.900 400.600,176.700 401.100,176.700 401.600,176.700 402.100,178.900 402.600,178.900 403.100,178.900 403.600,178.900 404.100,177.900 404.600,177.900 405.100,177.900 405.600,177.900 406.100,177.900 406.600,177.900 407.100,177.900 407.600,177.900 408.100,177.900 408.600,177.900 409.100,177.900 409.600,177.900 410.100,177.100 410.600,177.100 411.100,177.100 411.600,178.400 412.100,178.400 412.600,177.900 413.100,177.900 413.600,177.900 414.100,177.900 414.600,177.900 415.100,177.900 415.600,177.900 416.100,177.900 416.600,177.900 417.100,177.900 417.600,176.700 418.100,176.700 418.600,176.700 419.100,179 419.600,179 420.100,179 420.600,179 421.100,178 421.600,178 422.100,178 422.600,178 423.100,178 423.600,178 424.100,178 424.600,178 425.100,178 425.600,178 426.100,178 426.600,178 427.100,177.200 427.600,177.200 428.100,177.200 428.600,178.500 429.100,178.500 429.600,178 430.100,178 430.600,178 431.100,178 431.600,178 432.100,178 432.600,178 433.100,178 433.600,178 434.100,178 434.600,176.800 435.100,176.800 435.600,176.800 436.100,179 436.600,179 437.100,179 437.600,179 438.100,178 438.600,178 439.100,178 439.600,178 440.100,178 440.600,178 441.100,178 441.600,178 442.100,178 442.600,178 443.100,178 443.600,178 444.100,177.200 444.600,177.200 445.100,177.200 445.600,178.500 446.100,178.500 446.600,178 447.100,178 447.600,178 448.100,178 448.600,178 449.100,178 449.600,178.100 450.100,178.100 450.600,178.100 451.100,178.100 451.600,176.900 452.100,176.900 452.600,176.900 453.100,179.100 453.600,179.100 454.100,179.100 454.600,179.100 455.100,178.100 455.600,178.100 456.100,178.100 456.600,178.100 457.100,178.100 457.600,178.100 458.100,178.100 458.600,178.100 459.100,178.100 459.600,178.100 460.100,178.100 460.600,178.100 461.100,177.300 461.600,177.300 462.100,177.300 462.600,178.600 463.100,178.600 463.600,178.100 464.100,178.100 464.600,178.100 465.100,178.100 465.600,178.100 466.100,178.100 466.600,178.100 467.100,178.100 467.600,178.100 468.100,178.100 468.600,176.900 469.100,176.900 469.600,176.900 470.100,179.100 470.600,179.100 471.100,179.100 471.600,179.100 472.100,178.100 472.600,178.100 473.100,178.100 473.600,178.100 474.100,178.100 474.600,178.100 475.100,178.100 475.600,178.100 476.100,178.100 476.600,178.100 477.100,178.100 477.600,178.100 478.100,177.300 478.600,177.300 479.100,177.300 479.600,178.600 480.100,178.600 480.600,178.100 481.100,178.100 481.600,178.100 482.100,178.100 482.600,178.100 483.100,178.100 483.600,178.100 484.100,178.100 484.600,178.100 485.100,178.100 485.600,176.900 486.100,176.900 486.600,176.900 487.100,179.100 487.600,179.100 488.100,179.100 488.600,179.100 489.100,178.100 489.600,178.100 490.100,178.100 490.600,178.100 491.100,178.100 491.600,178.100 492.100,178.100 492.600,178.100 493.100,178.100 493.600,178.100 494.100,178.100 494.600,178.100 495.100,177.300 495.600,177.300 496.100,177.300 496.600,178.600 497.100,178.600 497.600,178.100 498.100,178.100 498.600,178.100 499.100,178.100 499.600,178.100 500.100,178.100 500.600,178.100 501.100,178.100 501.600,178.100 502.100,178.100 502.600,176.900 503.100,176.900 503.600,176.900 504.100,179.100 504.600,179.100 505.100,179.100 505.600,179.100 506.100,178.100 506.600,178.100 507.100,178.100 507.600,178.100 508.100,178.100 508.600,178.100 509.100,178.100 509.600,178.100 510.100,178.100 510.600,178.100 511.100,178.100 511.600,178.100 512.100,177.300 512.600,177.300 513.100,177.300 513.600,178.600 514.100,178.600 514.600,178.100 515.100,178.100 515.600,178.200 516.100,178.200 516.600,178.200 517.100,178.200 517.600,178.200 518.100,178.200 518.600,178.200 519.100,178.200 519.600,177 520.100,177 520.600,177 521.100,179.200 521.600,179.200 522.100,179.200 522.600,179.200 523.100,178.200 523.600,178.200 524.100,178.200 524.600,178.200 525.100,178.200 525.600,178.200 526.100,178.200 526.600,178.200 527.100,178.200 527.600,178.200 528.100,178.200 528.600,178.200 529.100,177.400 529.600,177.400 530.100,177.400 530.600,178.700 531.100,178.700 531.600,178.200 532.100,178.200 532.600,178.200 533.100,178.200 533.600,178.200 534.100,178.200 534.600,178.200 535.100,178.200 535.600,178.200 536.100,178.200 536.600,177 537.100,177 537.600,177 538.100,179.200 538.600,179.200 539.100,179.200 539.600,179.200 540.100,178.200 540.600,178.200 541.100,178.200 541.600,178.200 542.100,178.200 542.600,178.200 543.100,178.200 543.600,178.200 544.100,178.200 544.600,178.200 545.100,178.200 545.600,178.200 546.100,177.400 546.600,177.400 547.100,177.400 547.600,178.700 548.100,178.700 548.600,178.200 549.100,178.200 549.600,178.200 550.100,178.200 550.600,178.200 551.100,178.200 551.600,178.200 552.100,178.200 552.600,178.200 553.100,178.200 553.600,177 554.100,177 554.600,177 555.100,179.200 555.600,179.200 556.100,179.200 556.600,179.200 557.100,178.200 557.600,178.200 558.100,178.200 558.600,178.200 559.100,178.200 559.600,178.200 560.100,178.200 560.600,178.200 561.100,178.200 561.600,178.200 562.100,178.200 562.600,178.200 563.100,177.400 563.600,177.400 564.100,177.400 564.600,178.700 565.100,178.700 565.600,178.200 566.100,178.200 566.600,178.200 567.100,178.200 567.600,178.200 568.100,178.200 568.600,178.200 569.100,178.200 569.600,178.200 570.100,178.200 570.600,177 571.100,177 571.600,177 572.100,179.200 572.600,179.200 573.100,179.200 573.600,179.200 574.100,178.200 574.600,178.200 575.100,178.200 575.600,178.200 576.100,178.200 576.600,178.200 577.100,178.200 577.600,178.200 578.100,178.200 578.600,178.200 579.100,178.200 579.600,178.200 580.100,177.400 580.600,177.400 581.100,177.400 581.600,178.700 582.100,178.700 582.600,178.200 583.100,178.200 583.600,178.200 584.100,178.200 584.600,178.200 585.100,178.200 585.600,178.200 586.100,178.200 586.600,178.200 587.100,178.200 587.600,177 588.100,177 588.600,177 589.100,179.200 589.600,179.200 590.100,179.200 590.600,179.200 591.100,178.200 591.600,178.200 592.100,178.200 592.600,178.200 593.100,178.200 593.600,178.200 594.100,178.200 594.600,178.200 595.100,178.200 595.600,178.200 596.100,178.200 596.600,178.200 597.100,177.400 597.600,177.400 598.100,177.400 598.600,178.700 599.100,178.700 599.600,178.200 600.100,178.200 600.600,178.200 601.100,178.200 601.600,178.200 602.100,178.200 602.600,178.200 603.100,178.200 603.600,178.200 604.100,178.200 604.600,177 605.100,177 605.600,177 606.100,179.200 606.600,179.200 607.100,179.200 607.600,179.200 608.100,178.200 608.600,178.200 609.100,178.200 609.600,178.200 610.100,178.200 610.600,178.200 611.100,178.200 611.600,178.200 612.100,178.200 612.600,178.200 613.100,178.200 613.600,178.200 614.100,177.400 614.600,177.400 615.100,177.400 615.600,178.700 616.100,178.700 616.600,178.200 617.100,178.200 617.600,178.200 618.100,178.200 618.600,178.200 619.100,178.200 619.600,178.200 620.100,178.200 620.600,178.200 621.100,178.200 621.600,177 622.100,177 622.600,177 623.100,179.200 623.600,179.200 624.100,179.200 624.600,179.200 625.100,178.200 625.600,178.200 626.100,178.200 626.600,178.200 627.100,178.200 627.600,178.200 628.100,178.200 628.600,178.200 629.100,178.200 629.600,178.200 630.100,178.200 630.600,178.200 631.100,177.400 631.600,177.400 632.100,177.400 632.600,178.700 633.100,178.700 633.600,178.200 634.100,178.200 634.600,178.200 635.100,178.200 635.600,178.200 636.100,178.200 636.600,178.200 637.100,178.200 637.600,178.200 638.100,178.200 638.600,177 639.100,177 639.600,177 640.100,179.200 640.600,179.200 641.100,179.200 641.600,179.200 642.100,178.200 642.600,178.200 643.100,178.200 643.600,178.200 644.100,178.200 644.600,178.200 645.100,178.200 645.600,178.200 646.100,178.200 646.600,178.200 647.100,178.200 647.600,178.200 648.100,177.400 648.600,177.400 649.100,177.400 649.600,178.700 650.100,178.700 650.600,178.200 651.100,178.200 651.600,178.200 652.100,178.200 652.600,178.200 653.100,178.200 653.600,178.200 654.100,178.200 654.600,178.200 655.100,178.200 655.600,177 656.100,177 656.600,177 657.100,179.200 657.600,179.200 658.100,179.200 658.600,179.200 659.100,178.200 659.600,178.200 660.100,178.200 660.600,178.200 661.100,178.200 661.600,178.200 662.100,178.200 662.600,178.200 663.100,178.200 663.600,178.200 664.100,178.200 664.600,178.200 665.100,177.400 665.600,177.400 666.100,177.400 666.600,178.700 667.100,178.700 667.600,178.200 668.100,178.200 668.600,178.200 669.100,178.200 669.600,178.200 670.100,178.200 670.600,178.200 671.100,178.200 671.600,178.200 672.100,178.200 672.600,177 673.100,177 673.600,177 674.100,179.200 674.600,179.200 675.100,177.800 675.600,180.100 676.100,182.400 676.600,184.700 677.100,186.900 677.600,189 678.100,191.200 678.600,193.200 679.100,195.100 679.600,197 680.100,199 680.600,201 681.100,203 681.600,205.300 682.100,207.600 682.600,210 683.100,212.100 683.600,214.300 684.100,216.500 684.600,218.600 685.100,220.500 685.600,222.200 686.100,223.600 686.600,224.800 687.100,225.900 687.600,226.900 688.100,227.900 688.600,228.800 689.100,229.600 689.600,230.400 690.100,231.200 690.600,232 691.100,232.800 691.600,233.500 692.100,234.200 692.600,234.800 693.100,235.300 693.600,235.600 694.100,235.800 694.600,236 695.100,236.200 695.600,236.400 696.100,236.500 696.600,236.700 697.100,236.700 697.600,236.800 698.100,236.800 698.600,236.800 699.100,236.700 699.600,236.600 700.100,236.500 700.600,236.400 701.100,236.300 701.600,236.100 702.100,236 702.600,235.800 703.100,235.700 703.600,235.500 704.100,235.300 704.600,235.100 705.100,234.900 705.600,234.700 706.100,234.500 706.600,234.200 707.100,234 707.600,233.800 708.100,233.500 708.600,233.200 709.100,233 709.600,232.700 710.100,232.500 710.600,232.300 711.100,232 711.600,231.800 712.100,231.500 712.600,231.300 713.100,231 713.600,230.800 714.100,230.500 714.600,230.200 715.100,230 715.600,229.700 716.100,229.500 716.600,229.200 717.100,228.900 717.600,228.700 718.100,228.400 718.600,228.100 719.100,227.900 719.600,227.600 720.100,227.300 720.600,227.100 721.100,226.800 721.600,226.500 722.100,226.300 722.600,226 723.100,225.700 723.600,225.400 724.100,225.200 724.600,224.900 725.100,224.600 725.600,224.300 726.100,224.100 726.600,223.800 727.100,223.500 727.600,223.200 728.100,222.900 728.600,222.600 729.100,222.400 729.600,222.100 730.100,221.800 730.600,221.500 731.100,221.200 731.600,220.900 732.100,220.600 732.600,220.300 733.100,220 733.600,219.800 734.100,219.500 734.600,219.200 735.100,218.900 735.600,218.600 736.100,218.300 736.600,218.100 737.100,217.800 737.600,217.500 738.100,217.300 738.600,217 739.100,216.700 739.600,216.500 740.100,216.200 740.600,216 741.100,215.700 741.600,215.400 742.100,215.200 742.600,214.900 743.100,214.700 743.600,214.400 744.100,214.200 744.600,213.900 745.100,213.700 745.600,213.400 746.100,213.200 746.600,213 747.100,212.700 747.600,212.500 748.100,212.200 748.600,212 749.100,211.700 749.600,211.500 750.100,211.300 750.600,211 751.100,210.800 751.600,210.500 752.100,210.300 752.600,210.100 753.100,209.800 753.600,209.600 754.100,209.300 754.600,209.100 755.100,208.800 755.600,208.600 756.100,208.400 756.600,208.100 757.100,207.900 757.600,207.600 758.100,207.400 758.600,207.100 759.100,206.900 759.600,206.700 760.100,206.400 760.600,206.200 761.100,206 761.600,205.700 762.100,205.500 762.600,205.300 763.100,205 763.600,204.800 764.100,204.600 764.600,204.400 765.100,204.200 765.600,204 766.100,203.800 766.600,203.600 767.100,203.400 767.600,203.200 768.100,203 768.600,202.800 769.100,202.600 769.600,202.400 770.100,202.200 770.600,202 771.100,201.900 771.600,201.700 772.100,201.500 772.600,201.300 773.100,201.200 773.600,201 774.100,200.800 774.600,200.600 775.100,200.500 775.600,200.300 776.100,200.100 776.600,200 777.100,199.800 777.600,199.600 778.100,199.500 778.600,199.300 779.100,199.200 779.600,199 780.100,198.900 780.600,198.700 781.100,198.500 781.600,198.400 782.100,198.200 782.600,198.100 783.100,197.900 783.600,197.800 784.100,197.600 784.600,197.500 785.100,197.300 785.600,197.200 786.100,197 786.600,196.900 787.100,196.700 787.600,196.600 788.100,196.500 788.600,196.300 789.100,196.200 789.600,196 790.100,195.900 790.600,195.700 791.100,195.600 791.600,195.500 792.100,195.300 792.600,195.200 793.100,195.100 793.600,194.900 794.100,194.800 794.600,194.700 795.100,194.500 795.600,194.400 796.100,194.300 796.600,194.100 797.100,194 797.600,193.900 798.100,193.800 798.600,193.600 799.100,193.500 799.600,193.400 800.100,193.300 800.600,193.200 801.100,193 801.600,192.900 802.100,192.800 802.600,192.700 803.100,192.600 803.600,192.500 804.100,192.400 804.600,192.200 805.100,192.100 805.600,192 806.100,191.900 806.600,191.800 807.100,191.700 807.600,191.600 808.100,191.500 808.600,191.400 809.100,191.300 809.600,191.200 810.100,191 810.600,190.900 811.100,190.800 811.600,190.700 812.100,190.600 812.600,190.500 813.100,190.400 813.600,190.300 814.100,190.200 814.600,190.100 815.100,190 815.600,189.900 816.100,189.800 816.600,189.700 817.100,189.600 817.600,189.600 818.100,189.500 818.600,189.400 819.100,189.300 819.600,189.200 820.100,189.100 820.600,189 821.100,188.900 821.600,188.800 822.100,188.800 822.600,188.700 823.100,188.600 823.600,188.500 824.100,188.400 824.600,188.400 825.100,188.300 825.600,188.200 826.100,188.100 826.600,188.100 827.100,188 827.600,187.900 828.100,187.800 828.600,187.800 829.100,187.700 829.600,187.600 830.100,187.600 830.600,187.500 831.100,187.400 831.600,187.400 832.100,187.300 832.600,187.200 833.100,187.200 833.600,187.100 834.100,187.100 834.600,187 835.100,186.900 835.600,186.900 836.100,186.800 836.600,186.800 837.100,186.700 837.600,186.600 838.100,186.600 838.600,186.500 839.100,186.500 839.600,186.400 840.100,186.400 840.600,186.300 841.100,186.200 841.600,186.200 842.100,186.100 842.600,186.100 843.100,186 843.600,186 844.100,185.900 844.600,185.900 845.100,185.800 845.600,185.800 846.100,185.700 846.600,185.700 847.100,185.600 847.600,185.500 848.100,185.500 848.600,185.400 849.100,185.400 849.600,185.300 850.100,185.300 850.600,185.200 851.100,185.200 851.600,185.100 852.100,185.100 852.600,185 853.100,185 853.600,184.900 854.100,184.900 854.600,184.800 855.100,184.800 855.600,184.700 856.100,184.700 856.600,184.600 857.100,184.600 857.600,184.500 858.100,184.500 858.600,184.400 859.100,184.400 859.600,184.300 860.100,184.300 860.600,184.200 861.100,184.200 861.600,184.100 862.100,184.100 862.600,184 863.100,184 863.600,184 864.100,183.900 864.600,183.900 865.100,183.800 865.600,183.800 866.100,183.700 866.600,183.700 867.100,183.600 867.600,183.600 868.100,183.500 868.600,183.500 869.100,183.400 869.600,183.400 870.100,183.300 870.600,183.300 871.100,183.300 871.600,183.200 872.100,183.200 872.600,183.100 873.100,183.100 873.600,183 874.100,183 874.600,183 875.100,182.900 875.600,182.900 876.100,182.800 876.600,182.800 877.100,182.700 877.600,182.700 878.100,182.700 878.600,182.600 879.100,182.600 879.600,182.500 880.100,182.900 880.600,182.900 881.100,182.800 881.600,182.800 882.100,182.700 882.600,182.700 883.100,182.600 883.600,182.600 884.100,182.500 884.600,182.500 885.100,182.400 885.600,182.400 886.100,182.300 886.600,182.300 887.100,182.300 887.600,182.200 888.100,182.200 888.600,182.100 889.100,182.100 889.600,182 890.100,182 890.600,181.900 891.100,181.900 891.600,181.900 892.100,181.800 892.600,181.800 893.100,181.700 893.600,181.700 894.100,181.700 894.600,181.600 895.100,181.600 895.600,181.600 896.100,181.500 896.600,181.500 897.100,181.400 897.600,181.400 898.100,181.400 898.600,181.300 899.100,181.300 899.600,181.300 900.100,181.200 900.600,181.200 901.100,181.200 901.600,181.100 902.100,181.100 902.600,181.100 903.100,181 903.600,181 904.100,181 904.600,181 905.100,180.900 905.600,180.900 906.100,180.900 906.600,180.800 907.100,180.800 907.600,180.800 908.100,180.800 908.600,180.700 909.100,180.700 909.600,180.700 910.100,180.600 910.600,180.600 911.100,180.600 911.600,180.600 912.100,180.500 912.600,180.500 913.100,180.500 913.600,180.500 914.100,180.400 914.600,180.400 915.100,180.400 915.600,180.400 916.100,180.400 916.600,180.300 917.100,180.300 917.600,180.300 918.100,180.300 918.600,180.200 919.100,180.200 919.600,180.200 920.100,180.200 920.600,180.200 921.100,180.100 921.600,180.100 922.100,180.100 922.600,180.100 923.100,180.100 923.600,180 924.100,180 924.600,180 925.100,180 925.600,180 926.100,180 926.600,179.900 927.100,179.900 927.600,179.900 928.100,179.900 928.600,179.900 929.100,179.800 929.600,179.800 930.100,179.800 930.600,179.800 931.100,179.800 931.600,179.800 932.100,179.800 932.600,179.700 933.100,179.700 933.600,179.700 934.100,179.700 934.600,179.700 935.100,179.700 935.600,179.600 936.100,179.600 936.600,179.600 937.100,179.600 937.600,179.600 938.100,179.600 938.600,179.600 939.100,179.600 939.600,179.500 940.100,179.500 940.600,179.500 941.100,179.500 941.600,179.500 942.100,179.500 942.600,179.500 943.100,179.500 943.600,179.400 944.100,179.400 944.600,179.400 945.100,179.400 945.600,179.400 946.100,179.400 946.600,179.400 947.100,179.400 947.600,179.300 948.100,179.300 948.600,179.300 949.100,179.300 949.600,179.300 950.100,179.300 950.600,179.300 951.100,179.300 951.600,179.300 952.100,179.300 952.600,179.200 953.100,179.200 953.600,179.200 954.100,179.200 954.600,179.200 955.100,179.200 955.600,179.200 956.100,179.200 956.600,179.200 957.100,179.200 957.600,179.200 958.100,179.200 958.600,179.100 959.100,179.100 959.600,179.100 960.100,179.100 960.600,179.100 961.100,179.100 961.600,179.100 962.100,179.100 962.600,179.100 963.100,179.100 963.600,179.100 964.100,179.100 964.600,179.100 965.100,179 965.600,179 966.100,179 966.600,179 967.100,179 967.600,179 968.100,179 968.600,179 969.100,179 969.600,179 970.100,179 970.600,179 971.100,179 971.600,179 972.100,179 972.600,178.900 973.100,178.900 973.600,178.900 974.100,178.900 974.600,178.900 975.100,178.900 975.600,178.900 976.100,178.900 976.600,178.900 977.100,178.900 977.600,178.900 978.100,178.900 978.600,178.900 979.100,178.900 979.600,178.900 980.100,178.900 980.600,178.900 981.100,178.900 981.600,178.900 982.100,178.800 982.600,178.800 983.100,178.800 983.600,178.800 984.100,178.800 984.600,178.800 985.100,178.800 985.600,178.800 986.100,178.800 986.600,178.800 987.100,178.800 987.600,178.800 988.100,178.800 988.600,178.800 989.100,178.800 989.600,178.800 990.100,178.800 990.600,178.800 991.100,178.800 991.600,178.800 992.100,178.800 992.600,178.800 993.100,178.800 993.600,178.800 994.100,178.700 994.600,178.700 995.100,178.700 995.600,178.700 996.100,178.700 996.600,178.700 997.100,178.700 997.600,178.700 998.100,178.700 998.600,178.700 999.100,178.700 999.600,178.700 1000.100,178.700 1000.600,178.700 1001.100,178.700 1001.600,178.700 1002.100,178.700 1002.600,178.700 1003.100,178.700 1003.600,178.700 1004.100,178.700 1004.600,178.700 1005.100,178.700 1005.600,178.700 1006.100,178.700 1006.600,178.700 1007.100,178.700 1007.600,178.700 1008.100,178.700 1008.600,178.700 1009.100,178.700 1009.600,178.700 1010.100,178.700 1010.600,178.700 1011.100,178.600 1011.600,178.600 1012.100,178.600 1012.600,178.600 1013.100,177.300 1013.600,177.300 1014.100,177.300 1014.600,177.300 1015.100,178.200 1015.600,178.200 1016.100,178.200 1016.600,178.200 1017.100,177.300 1017.600,177.300 1018.100,177.300 1018.600,177.300 1019.100,178.200 1019.600,178.200 1020.100,178.200 1020.600,178.200 1021.100,177.300 1021.600,177.300 1022.100,177.300 1022.600,177.300 1023.100,178.100 1023.600,178.100 1024.100,178.100 1024.600,178.100 1025.100,177.200 1025.600,177.200 1026.100,177.200 1026.600,177.200 1027.100,178.100 1027.600,178.100 1028.100,178.100 1028.600,178.100 1029.100,177.200 1029.600,177.200 1030.100,177.200 1030.600,177.200 1031.100,178.100 1031.600,178.100 1032.100,178.100 1032.600,178.100 1033.100,177.200 1033.600,177.200 1034.100,177.200 1034.600,177.200 1035.100,178.100 1035.600,178.100 1036.100,178.100 1036.600,178.100 1037.100,177.200 1037.600,177.200 1038.100,177.200 1038.600,177.200 1039.100,178.100 1039.600,178.100 1040.100,178.100 1040.600,178.100 1041.100,177.200 1041.600,177.200 1042.100,177.200 1042.600,177.200 1043.100,178.100 1043.600,178.100 1044.100,178.100 1044.600,178.100 1045.100,177.200 1045.600,177.200 1046.100,177.200 1046.600,177.200 1047.100,178.100 1047.600,178.100 1048.100,178.100 1048.600,178.100 1049.100,177.200 1049.600,177.200 1050.100,177.200 1050.600,177.200 1051.100,178.100 1051.600,178.100 1052.100,178.100 1052.600,178.100 1053.100,177.200 1053.600,177.200 1054.100,177.200 1054.600,177.200 1055.100,178.100 1055.600,178.100 1056.100,178.100 1056.600,178.100 1057.100,177.200 1057.600,177.200 1058.100,177.200 1058.600,177.200 1059.100,178.100 1059.600,178.100 1060.100,178.100 1060.600,178.100 1061.100,177.200 1061.600,177.200 1062.100,177.200 1062.600,177.200 1063.100,178.100 1063.600,178.100 1064.100,178.100 1064.600,178.100 1065.100,177.200 1065.600,177.200 1066.100,177.200 1066.600,177.200 1067.100,178.100 1067.600,178.100 1068.100,178.100 1068.600,178.100 1069.100,177.100 1069.600,177.100 1070.100,177.100 1070.600,177.100 1071.100,178 1071.600,178 1072.100,178.800 1072.600,178.800 1073.100,178 1073.600,178 1074.100,178 1074.600,178 1075.100,178 1075.600,178 1076.100,178 1076.600,178 1077.100,178 1077.600,178 1078.100,178 1078.600,178 1079.100,178 1079.600,178 1080.100,178.800 1080.600,178.800 1081.100,178 1081.600,178 1082.100,178 1082.600,178 1083.100,178 1083.600,178 1084.100,178 1084.600,178 1085.100,178 1085.600,178 1086.100,178 1086.600,178 1087.100,178 1087.600,178 1088.100,178.800 1088.600,178.800 1089.100,178 1089.600,178 1090.100,178 1090.600,178 1091.100,178 1091.600,178 1092.100,178 1092.600,178 1093.100,178 1093.600,178 1094.100,178 1094.600,178 1095.100,178 1095.600,178 1096.100,178.800 1096.600,178.800 1097.100,178 1097.600,178 1098.100,178 1098.600,178 1099.100,178 1099.600,178 1100.100,178 1100.600,178 1101.100,178 1101.600,178 1102.100,178 1102.600,178 1103.100,178 1103.600,178 1104.100,178.800 1104.600,178.800 1105.100,178 1105.600,178 1106.100,178 1106.600,178 1107.100,178 1107.600,178 1108.100,178 1108.600,178 1109.100,178 1109.600,178 1110.100,178 1110.600,178 1111.100,178 1111.600,178 1112.100,178.800 1112.600,178.800 1113.100,178 1113.600,178 1114.100,178 1114.600,178 1115.100,178 1115.600,178 1116.100,178 1116.600,178 1117.100,178 1117.600,178 1118.100,178 1118.600,178 1119.100,178 1119.600,178 1120.100,178.800 1120.600,178.800 1121.100,178 1121.600,178 1122.100,178 1122.600,178 1123.100,178 1123.600,178 1124.100,178 1124.600,178 1125.100,178 1125.600,178 1126.100,178 1126.600,178 1127.100,178 1127.600,178 1128.100,178.800 1128.600,178.800 1129.100,178 1129.600,178 1130.100,178 1130.600,178 1131.100,178 1131.600,178 1132.100,178 1132.600,178 1133.100,178 1133.600,178 1134.100,178 1134.600,178 1135.100,178 1135.600,178 1136.100,178.800 1136.600,178.800 1137.100,178 1137.600,178 1138.100,178 1138.600,178 1139.100,178 1139.600,178 1140.100,178 1140.600,178 1141.100,178 1141.600,178 1142.100,178 1142.600,178 1143.100,178 1143.600,178 1144.100,178 1144.600,178 1145.100,178 1145.600,178 1146.100,178 1146.600,178 1147.100,178 1147.600,178 1148.100,178 1148.600,178 1149.100,178 1149.600,178 1150.100,178 1150.600,178 1151.100,178 1151.600,178 1152.100,178 1152.600,178 1153.100,178 1153.600,178 1154.100,178 1154.600,178 1155.100,178 1155.600,178 1156.100,178 1156.600,178 1157.100,178 1157.600,178 1158.100,178 1158.600,178 1159.100,178 1159.600,178 1160.100,178 1160.600,178 1161.100,178 1161.600,178 1162.100,178 1162.600,178 1163.100,178 1163.600,178 1164.100,178 1164.600,178 1165.100,178 1165.600,178 1166.100,178 1166.600,178 1167.100,178 1167.600,178 1168.100,178 1168.600,178 1169.100,178 1169.600,178 1170.100,178 1170.600,178 1171.100,178 1171.600,178 1172.100,178 1172.600,178 1173.100,178 1173.600,178 1174.100,178 1174.600,178 1175.100,178 1175.600,178 1176.100,178 1176.600,178 1177.100,178 1177.600,178 1178.100,178 1178.600,178 1179.100,178 1179.600,178 1180.100,178 1180.600,178 1181.100,178 1181.600,178 1182.100,178 1182.600,178 1183.100,178 1183.600,178 1184.100,178 1184.600,178 1185.100,178 1185.600,178 1186.100,178 1186.600,178 1187.100,178 1187.600,178 1188.100,178 1188.600,178 1189.100,178 1189.600,178 1190.100,178 1190.600,178 1191.100,178 1191.600,178 1192.100,178 1192.600,178 1193.100,178 1193.600,178 1194.100,178 1194.600,178 1195.100,178 1195.600,178 1196.100,178 1196.600,178 1197.100,178 1197.600,178 1198.100,178 1198.600,178 1199.100,178 1199.600,178 1200.100,178 1200.600,178 1201.100,178 1201.600,178 1202.100,178 1202.600,178 1203.100,178 1203.600,178 1204.100,178 1204.600,178 1205.100,178 1205.600,178 1206.100,178 1206.600,178 1207.100,178 1207.600,178 1208.100,178 1208.600,178 1209.100,178 1209.600,178 1210.100,178 1210.600,178 1211.100,178 1211.600,178 1212.100,178 1212.600,178 1213.100,178 1213.600,178 1214.100,178 1214.600,178 1215.100,178 1215.600,178 1216.100,178 1216.600,178 1217.100,178 1217.600,178 1218.100,178 1218.600,178 1219.100,178 1219.600,178 1220.100,178 1220.600,178 1221.100,178 1221.600,178 1222.100,178 1222.600,178 1223.100,178 1223.600,178 1224.100,178 1224.600,178 1225.100,178 1225.600,178 1226.100,178 1226.600,178 1227.100,178 1227.600,178 1228.100,178 1228.600,178 1229.100,178 1229.600,178 1230.100,178 1230.600,178 1231.100,178 1231.600,178 1232.100,178 1232.600,178 1233.100,178 1233.600,178 1234.100,178 1234.600,178 1235.100,178 1235.600,178 1236.100,178 1236.600,178 1237.100,178 1237.600,178 1238.100,178 1238.600,178 1239.100,178 1239.600,178 1240.100,178 1240.600,178 1241.100,178 1241.600,178 1242.100,178 1242.600,178 1243.100,178 1243.600,178 1244.100,178 1244.600,178 1245.100,178 1245.600,178 1246.100,178 1246.600,178 1247.100,178 1247.600,178 1248.100,178 1248.600,178 1249.100,178 1249.600,178 1250.100,178 1250.600,178 1251.100,178 1251.600,178 1252.100,178 1252.600,178 1253.100,178 1253.600,178 1254.100,178 1254.600,178 1255.100,178 1255.600,178 1256.100,178 1256.600,178 1257.100,178 1257.600,178 1258.100,178 1258.600,178 1259.100,178 1259.600,178 1260.100,178 1260.600,178 1261.100,178 1261.600,178 1262.100,178 1262.600,178 1263.100,178 1263.600,178 1264.100,178 1264.600,178 1265.100,178 1265.600,178 1266.100,178 1266.600,178 1267.100,178 1267.600,178 1268.100,178 1268.600,178 1269.100,178 1269.600,178 1270.100,178 1270.600,178 1271.100,178 1271.600,178 1272.100,178 1272.600,178 1273.100,178 1273.600,178 1274.100,178 1274.600,178 1275.100,178 1275.600,178 1276.100,178 1276.600,178 1277.100,178 1277.600,178 1278.100,178 1278.600,178 1279.100,178 1279.600,178 1280.100,178 1280.600,178 1281.100,178 1281.600,178 1282.100,178 1282.600,178 1283.100,178 1283.600,178 1284.100,178 1284.600,178 1285.100,178 1285.600,178 1286.100,178 1286.600,178 1287.100,178 1287.600,178 1288.100,178 1288.600,178 1289.100,178 1289.600,178 1290.100,178 1290.600,178 1291.100,178 1291.600,178 1292.100,178 1292.600,178 1293.100,178 1293.600,178 1294.100,178 1294.600,178 1295.100,178 1295.600,178 1296.100,178 1296.600,178 1297.100,178 1297.600,178 1298.100,178 1298.600,178 1299.100,178 1299.600,178 1300.100,178 1300.600,178 1301.100,178 1301.600,178 1302.100,178 1302.600,178 1303.100,178 1303.600,178 1304.100,178 1304.600,178 1305.100,178 1305.600,178 1306.100,178 1306.600,178 1307.100,178 1307.600,178 1308.100,178 1308.600,178 1309.100,178 1309.600,178 1310.100,178 1310.600,178 1311.100,178 1311.600,178 1312.100,178 1312.600,178 1313.100,178 1313.600,178 1314.100,178 1314.600,178 1315.100,178 1315.600,178 1316.100,178 1316.600,178" fill="none" stroke="#f00" stroke-width="2" stroke-linejoin="round" shape-rendering="crispEdges" />
<polyline points="92.800,367.800 93.800,372.400 94.800,377.100 95.800,381.600 96.800,386 97.800,390.200 98.800,394.200 99.800,397.800 100.800,401 101.800,403.800 102.800,406.100 103.800,408 104.800,409.300 105.800,410 106.800,410.200 107.800,409.800 108.800,408.800 109.800,407.300 110.800,405.300 111.800,402.800 112.800,399.800 113.800,396.500 114.800,392.700 115.800,388.700 116.800,384.400 117.800,379.900 118.800,375.300 119.800,370.700 120.800,366.100 121.800,361.600 122.800,357.200 123.800,353.100 124.800,349.200 125.800,345.700 126.800,342.600 127.800,340 128.800,337.800 129.800,336.200 130.800,335 131.800,334.500 132.800,334.500 133.800,335.100 134.800,336.200 135.800,337.900 136.800,340 137.800,342.700 138.800,345.800 139.800,349.300 140.800,353.200 141.800,357.300 142.800,361.600 143.800,366.200 144.800,370.800 145.800,375.400 146.800,380 147.800,384.500 148.800,388.700 149.800,392.800 150.800,396.500 151.800,399.900 152.800,402.900 153.800,405.400 154.800,407.400 155.800,408.900 156.800,409.800 157.800,410.200 158.800,410 159.800,409.200 160.800,407.900 161.800,406.100 162.800,403.800 163.800,400.900 164.800,397.700 165.800,394.100 166.800,390.100 167.800,385.900 168.800,381.500 169.800,377 170.800,372.300 171.800,367.700 172.800,363.200 173.800,358.700 174.800,354.500 175.800,350.600 176.800,347 177.800,343.700 178.800,340.900 179.800,338.500 180.800,336.700 181.800,335.400 182.800,334.600 183.800,334.400 184.800,334.800 185.800,335.700 186.800,337.200 187.800,339.200 188.800,341.700 189.800,344.600 190.800,348 191.800,351.700 192.800,355.800 193.800,360.100 194.800,364.500 195.800,369.100 196.800,373.700 197.800,378.400 198.800,382.900 199.800,387.200 200.800,391.400 201.800,395.200 202.800,398.700 203.800,401.800 204.800,404.500 205.800,406.700 206.800,408.400 207.800,409.500 208.800,410.100 209.800,410.100 210.800,409.600 211.800,408.500 212.800,406.800 213.800,404.700 214.800,402 215.800,398.900 216.800,395.400 217.800,391.600 218.800,387.500 219.800,383.100 220.800,378.600 221.800,374 222.800,369.400 223.800,364.800 224.800,360.300 225.800,356 226.800,352 227.800,348.200 228.800,344.800 229.800,341.800 230.800,339.300 231.800,337.300 232.800,335.800 233.800,334.800 234.800,334.400 235.800,334.600 236.800,335.300 237.800,336.600 238.800,338.400 239.800,340.700 240.800,343.500 241.800,346.800 242.800,350.400 243.800,354.300 244.800,358.500 245.800,362.900 246.800,367.500 247.800,372.100 248.800,376.700 249.800,381.300 250.800,385.700 251.800,389.900 252.800,393.900 253.800,397.500 254.800,400.800 255.800,403.600 256.800,406 257.800,407.800 258.800,409.200 259.800,410 260.800,410.200 261.800,409.800 262.800,408.900 263.800,407.500 264.800,405.500 265.800,403 266.800,400.100 267.800,396.700 268.800,393 269.800,389 270.800,384.700 271.800,380.200 272.800,375.700 273.800,371 274.800,366.400 275.800,361.900 276.800,357.500 277.800,353.400 278.800,349.500 279.800,346 280.800,342.900 281.800,340.200 282.800,338 283.800,336.300 284.800,335.100 285.800,334.500 286.800,334.500 287.800,335 288.800,336.100 289.800,337.700 290.800,339.800 291.800,342.500 292.800,345.600 293.800,349 294.800,352.900 295.800,357 296.800,361.300 297.800,365.800 298.800,370.400 299.800,375 300.800,379.600 301.800,384.100 302.800,388.400 303.800,392.500 304.800,396.300 305.800,399.700 306.800,402.600 307.800,405.200 308.800,407.200 309.800,408.800 310.800,409.700 311.800,410.200 312.800,410 313.800,409.300 314.800,408.100 315.800,406.300 316.800,404 317.800,401.200 318.800,398 319.800,394.400 320.800,390.500 321.800,386.300 322.800,381.900 323.800,377.300 324.800,372.700 325.800,368.100 326.800,363.500 327.800,359.100 328.800,354.800 329.800,350.900 330.800,347.200 331.800,343.900 332.800,341.100 333.800,338.700 334.800,336.800 335.800,335.500 336.800,334.700 337.800,334.400 338.800,334.700 339.800,335.600 340.800,337.100 341.800,339 342.800,341.500 343.800,344.400 344.800,347.700 345.800,351.400 346.800,355.500 347.800,359.700 348.800,364.200 349.800,368.800 350.800,373.400 351.800,378 352.800,382.500 353.800,386.900 354.800,391.100 355.800,394.900 356.800,398.500 357.800,401.600 358.800,404.300 359.800,406.600 360.800,408.300 361.800,409.500 362.800,410.100 363.800,410.100 364.800,409.600 365.800,408.600 366.800,407 367.800,404.800 368.800,402.200 369.800,399.200 370.800,395.700 371.800,391.900 372.800,387.800 373.800,383.500 374.800,379 375.800,374.400 376.800,369.700 377.800,365.100 378.800,360.600 379.800,356.300 380.800,352.300 381.800,348.500 382.800,345.100 383.800,342.100 384.800,339.500 385.800,337.400 386.800,335.900 387.800,334.900 388.800,334.400 389.800,334.600 390.800,335.200 391.800,336.500 392.800,338.300 393.800,340.500 394.800,343.300 395.800,346.500 396.800,350.100 397.800,354 398.800,358.200 399.800,362.600 400.800,367.100 401.800,371.700 402.800,376.300 403.800,380.900 404.800,385.400 405.800,389.600 406.800,393.600 407.800,397.200 408.800,400.500 409.800,403.400 410.800,405.800 411.800,407.700 412.800,409.100 413.800,409.900 414.800,410.200 415.800,409.900 416.800,409 417.800,407.600 418.800,405.700 419.800,403.200 420.800,400.300 421.800,397 422.800,393.300 423.800,389.300 424.800,385 425.800,380.600 426.800,376 427.800,371.400 428.800,366.800 429.800,362.200 430.800,357.900 431.800,353.700 432.800,349.800 433.800,346.300 434.800,343.100 435.800,340.400 436.800,338.100 437.800,336.400 438.800,335.200 439.800,334.500 440.800,334.400 441.800,334.900 442.800,336 443.800,337.600 444.800,339.700 445.800,342.300 446.800,345.300 447.800,348.700 448.800,352.500 449.800,356.600 450.800,361 451.800,365.500 452.800,370.100 453.800,374.700 454.800,379.300 455.800,383.800 456.800,388.100 457.800,392.200 458.800,396 459.800,399.400 460.800,402.400 461.800,405 462.800,407.100 463.800,408.700 464.800,409.700 465.800,410.200 466.800,410.100 467.800,409.400 468.800,408.200 469.800,406.400 470.800,404.200 471.800,401.400 472.800,398.200 473.800,394.700 474.800,390.800 475.800,386.600 476.800,382.200 477.800,377.700 478.800,373.100 479.800,368.400 480.800,363.900 481.800,359.400 482.800,355.200 483.800,351.200 484.800,347.500 485.800,344.200 486.800,341.300 487.800,338.900 488.800,336.900 489.800,335.500 490.800,334.700 491.800,334.400 492.800,334.700 493.800,335.500 494.800,336.900 495.800,338.900 496.800,341.300 497.800,344.200 498.800,347.500 499.800,351.100 500.800,355.100 501.800,359.400 502.800,363.800 503.800,368.400 504.800,373 505.800,377.600 506.800,382.200 507.800,386.600 508.800,390.700 509.800,394.600 510.800,398.200 511.800,401.400 512.800,404.100 513.800,406.400 514.800,408.200 515.800,409.400 516.800,410.100 517.800,410.200 518.800,409.700 519.800,408.700 520.800,407.100 521.800,405 522.800,402.400 523.800,399.400 524.800,396 525.800,392.200 526.800,388.100 527.800,383.800 528.800,379.300 529.800,374.700 530.800,370.100 531.800,365.500 532.800,361 533.800,356.700 534.800,352.600 535.800,348.800 536.800,345.300 537.800,342.300 538.800,339.700 539.800,337.600 540.800,336 541.800,334.900 542.800,334.400 543.800,334.500 544.800,335.200 545.800,336.400 546.800,338.100 547.800,340.300 548.800,343.100 549.800,346.200 550.800,349.800 551.800,353.700 552.800,357.800 553.800,362.200 554.800,366.700 555.800,371.400 556.800,376 557.800,380.600 558.800,385 559.800,389.300 560.800,393.300 561.800,397 562.800,400.300 563.800,403.200 564.800,405.700 565.800,407.600 566.800,409 567.800,409.900 568.800,410.200 569.800,409.900 570.800,409.100 571.800,407.700 572.800,405.800 573.800,403.400 574.800,400.600 575.800,397.300 576.800,393.600 577.800,389.600 578.800,385.400 579.800,380.900 580.800,376.400 581.800,371.800 582.800,367.100 583.800,362.600 584.800,358.200 585.800,354 586.800,350.100 587.800,346.500 588.800,343.300 589.800,340.600 590.800,338.300 591.800,336.500 592.800,335.200 593.800,334.600 594.800,334.400 595.800,334.900 596.800,335.900 597.800,337.400 598.800,339.500 599.800,342 600.800,345.100 601.800,348.500 602.800,352.200 603.800,356.300 604.800,360.600 605.800,365.100 606.800,369.700 607.800,374.300 608.800,378.900 609.800,383.400 610.800,387.800 611.800,391.900 612.800,395.700 613.800,399.100 614.800,402.200 615.800,404.800 616.800,406.900 617.800,408.500 618.800,409.600 619.800,410.100 620.800,410.100 621.800,409.500 622.800,408.300 623.800,406.700 624.800,404.500 625.800,401.800 626.800,398.700 627.800,395.200 628.800,391.400 629.800,387.300 630.800,382.900 631.800,378.400 632.800,373.800 633.800,369.200 634.800,364.700 635.800,360.200 636.800,356 637.800,351.900 638.800,348.200 639.800,344.800 640.800,341.900 641.800,339.300 642.800,337.300 643.800,335.800 644.800,334.800 645.800,334.400 646.800,334.600 647.800,335.300 648.800,336.600 649.800,338.400 650.800,340.700 651.800,343.500 652.800,346.800 653.800,350.400 654.800,354.400 655.800,358.600 656.800,363.100 657.800,367.700 658.800,372.400 659.800,377.100 660.800,381.700 661.800,386.200 662.800,390.400 663.800,394.400 664.800,397.900 665.800,400.900 666.800,403.500 667.800,405.700 668.800,407.500 669.800,408.800 670.800,409.700 671.800,410.200 672.800,410.100 673.800,409.400 674.800,408.200 675.800,406.200 676.800,402.900 677.800,398.100 678.800,393 679.800,387.500 680.800,381.300 681.800,374.400 682.800,367.400 683.800,360.700 684.800,355 685.800,350.800 686.800,348.400 687.800,347.600 688.800,348.300 689.800,350.200 690.800,353.100 691.800,356.800 692.800,361 693.800,365.700 694.800,370.600 695.800,375.500 696.800,380.200 697.800,384.500 698.800,388.100 699.800,390.700 700.800,392.200 701.800,392.400 702.800,391.300 703.800,389 704.800,385.700 705.800,381.700 706.800,377.300 707.800,372.600 708.800,368.100 709.800,363.800 710.800,360.100 711.800,356.900 712.800,354.700 713.800,353.400 714.800,353.300 715.800,354.600 716.800,357.200 717.800,361 718.800,365.700 719.800,370.900 720.800,376.100 721.800,380.900 722.800,384.900 723.800,387.900 724.800,390 725.800,391 726.800,390.900 727.800,389.700 728.800,387.500 729.800,384.400 730.800,380.400 731.800,375.900 732.800,371 733.800,366.300 734.800,361.900 735.800,358.200 736.800,355.500 737.800,353.900 738.800,353.700 739.800,354.700 740.800,357 741.800,360.400 742.800,364.600 743.800,369.400 744.800,374.500 745.800,379.400 746.800,383.700 747.800,387.300 748.800,389.800 749.800,390.900 750.800,390.600 751.800,388.900 752.800,386 753.800,382.100 754.800,377.500 755.800,372.700 756.800,367.800 757.800,363.300 758.800,359.400 759.800,356.400 760.800,354.400 761.800,353.700 762.800,354.200 763.800,356 764.800,359 765.800,362.900 766.800,367.500 767.800,372.500 768.800,377.500 769.800,382.100 770.800,386 771.800,388.900 772.800,390.600 773.800,390.900 774.800,389.900 775.800,387.500 776.800,384.100 777.800,379.900 778.800,375.100 779.800,370.300 780.800,365.600 781.800,361.300 782.800,357.800 783.800,355.300 784.800,353.900 785.800,353.800 786.800,354.900 787.800,357.400 788.800,360.900 789.800,365.200 790.800,370 791.800,375 792.800,379.800 793.800,384.100 794.800,387.500 795.800,389.800 796.800,390.900 797.800,390.600 798.800,389.100 799.800,386.400 800.800,382.600 801.800,378.200 802.800,373.300 803.800,368.400 804.800,363.700 805.800,359.600 806.800,356.500 807.800,354.400 808.800,353.700 809.800,354.200 810.800,356 811.800,359 812.800,362.900 813.800,367.400 814.800,372.300 815.800,377.200 816.800,381.800 817.800,385.700 818.800,388.600 819.800,390.400 820.800,390.900 821.800,390.200 822.800,388.100 823.800,385 824.800,381 825.800,376.300 826.800,371.400 827.800,366.500 828.800,362.100 829.800,358.400 830.800,355.600 831.800,354 832.800,353.700 833.800,354.700 834.800,356.900 835.800,360.200 836.800,364.300 837.800,369 838.800,374 839.800,378.800 840.800,383.100 841.800,386.700 842.800,389.300 843.800,390.700 844.800,390.800 845.800,389.700 846.800,387.300 847.800,383.800 848.800,379.600 849.800,374.900 850.800,369.900 851.800,365.200 852.800,360.900 853.800,357.400 854.800,355 855.800,353.800 856.800,353.800 857.800,355.200 858.800,357.800 859.800,361.300 860.800,365.700 861.800,370.400 862.800,375.400 863.800,380.100 864.800,384.300 865.800,387.600 866.800,389.900 867.800,390.900 868.800,390.600 869.800,389.100 870.800,386.400 871.800,382.700 872.800,378.300 873.800,373.400 874.800,368.500 875.800,363.800 876.800,359.800 877.800,356.600 878.800,354.500 879.800,353.700 880.800,354.100 881.800,355.900 882.800,358.800 883.800,362.600 884.800,367.100 885.800,372 886.800,376.900 887.800,381.500 888.800,385.400 889.800,388.500 890.800,390.300 891.800,391 892.800,390.300 893.800,388.300 894.800,385.200 895.800,381.200 896.800,376.600 897.800,371.600 898.800,366.800 899.800,362.300 900.800,358.500 901.800,355.700 902.800,354 903.800,353.700 904.800,354.700 905.800,356.900 906.800,360.200 907.800,364.400 908.800,369.100 909.800,374.100 910.800,378.900 911.800,383.300 912.800,386.900 913.800,389.400 914.800,390.800 915.800,390.800 916.800,389.500 917.800,386.900 918.800,383.300 919.800,378.900 920.800,374 921.800,369 922.800,364.200 923.800,360.100 924.800,356.800 925.800,354.600 926.800,353.700 927.800,354.100 928.800,355.800 929.800,358.800 930.800,362.600 931.800,367.200 932.800,372.100 933.800,377 934.800,381.600 935.800,385.500 936.800,388.500 937.800,390.400 938.800,390.900 939.800,390.200 940.800,388.300 941.800,385.200 942.800,381.300 943.800,376.700 944.800,371.900 945.800,367 946.800,362.600 947.800,358.800 948.800,355.900 949.800,354.100 950.800,353.700 951.800,354.500 952.800,356.500 953.800,359.600 954.800,363.600 955.800,368.200 956.800,373.100 957.800,378 958.800,382.500 959.800,386.200 960.800,389 961.800,390.600 962.800,390.900 963.800,389.900 964.800,387.600 965.800,384.100 966.800,379.900 967.800,375.100 968.800,370.100 969.800,365.200 970.800,360.900 971.800,357.400 972.800,354.900 973.800,353.700 974.800,353.900 975.800,355.400 976.800,358.100 977.800,361.800 978.800,366.300 979.800,371.100 980.800,376.100 981.800,380.800 982.800,384.800 983.800,388 984.800,390.100 985.800,390.900 986.800,390.500 987.800,388.800 988.800,386 989.800,382.200 990.800,377.800 991.800,372.900 992.800,368.100 993.800,363.500 994.800,359.600 995.800,356.500 996.800,354.500 997.800,353.700 998.800,354.100 999.800,355.800 1000.800,358.700 1001.800,362.500 1002.800,366.900 1003.800,371.700 1004.800,376.600 1005.800,381.200 1006.800,385.200 1007.800,388.200 1008.800,390.200 1009.800,390.900 1010.800,390.400 1011.800,388.500 1012.800,385.600 1013.800,381.700 1014.800,377.100 1015.800,372.200 1016.800,367.300 1017.800,362.800 1018.800,358.900 1019.800,356 1020.800,354.200 1021.800,353.700 1022.800,354.400 1023.800,356.500 1024.800,359.600 1025.800,363.600 1026.800,368.300 1027.800,373.200 1028.800,378 1029.800,382.500 1030.800,386.200 1031.800,389 1032.800,390.600 1033.800,390.900 1034.800,390 1035.800,387.800 1036.800,384.500 1037.800,380.400 1038.800,375.800 1039.800,370.900 1040.800,366.100 1041.800,361.700 1042.800,358.100 1043.800,355.400 1044.800,353.900 1045.800,353.700 1046.800,354.800 1047.800,357.100 1048.800,360.400 1049.800,364.600 1050.800,369.300 1051.800,374.200 1052.800,379 1053.800,383.300 1054.800,386.800 1055.800,389.400 1056.800,390.700 1057.800,390.800 1058.800,389.600 1059.800,387.200 1060.800,383.800 1061.800,379.500 1062.800,374.800 1063.800,369.900 1064.800,365.100 1065.800,360.900 1066.800,357.400 1067.800,355 1068.800,353.800 1069.800,353.800 1070.800,355.200 1071.800,357.700 1072.800,361.300 1073.800,365.600 1074.800,370.400 1075.800,375.300 1076.800,380 1077.800,384.200 1078.800,387.500 1079.800,389.800 1080.800,390.900 1081.800,390.700 1082.800,389.200 1083.800,386.500 1084.800,382.900 1085.800,378.500 1086.800,373.700 1087.800,368.800 1088.800,364.100 1089.800,360 1090.800,356.800 1091.800,354.600 1092.800,353.700 1093.800,354 1094.800,355.700 1095.800,358.500 1096.800,362.200 1097.800,366.700 1098.800,371.500 1099.800,376.400 1100.800,381 1101.800,385 1102.800,388.100 1103.800,390.200 1104.800,390.900 1105.800,390.400 1106.800,388.600 1107.800,385.700 1108.800,381.900 1109.800,377.400 1110.800,372.500 1111.800,367.600 1112.800,363 1113.800,359.100 1114.800,356.100 1115.800,354.300 1116.800,353.600 1117.800,354.300 1118.800,356.300 1119.800,359.300 1120.800,363.300 1121.800,367.900 1122.800,372.800 1123.800,377.600 1124.800,382.100 1125.800,385.900 1126.800,388.800 1127.800,390.500 1128.800,390.900 1129.800,390.100 1130.800,388 1131.800,384.800 1132.800,380.700 1133.800,376 1134.800,371.100 1135.800,366.300 1136.800,361.900 1137.800,358.200 1138.800,355.500 1139.800,354 1140.800,353.700 1141.800,354.800 1142.800,357.100 1143.800,360.400 1144.800,364.600 1145.800,369.300 1146.800,374.300 1147.800,379.100 1148.800,383.400 1149.800,386.900 1150.800,389.500 1151.800,390.800 1152.800,390.800 1153.800,389.500 1154.800,387 1155.800,383.500 1156.800,379.200 1157.800,374.400 1158.800,369.500 1159.800,364.700 1160.800,360.500 1161.800,357.100 1162.800,354.800 1163.800,353.700 1164.800,353.900 1165.800,355.500 1166.800,358.200 1167.800,361.800 1168.800,366.300 1169.800,371.100 1170.800,376.100 1171.800,380.800 1172.800,384.800 1173.800,388 1174.800,390.100 1175.800,390.900 1176.800,390.400 1177.800,388.700 1178.800,385.700 1179.800,381.800 1180.800,377.200 1181.800,372.300 1182.800,367.300 1183.800,362.800 1184.800,358.900 1185.800,355.900 1186.800,354.100 1187.800,353.700 1188.800,354.500 1189.800,356.600 1190.800,359.900 1191.800,364 1192.800,368.700 1193.800,373.600 1194.800,378.500 1195.800,382.900 1196.800,386.600 1197.800,389.200 1198.800,390.700 1199.800,390.900 1200.800,389.700 1201.800,387.400 1202.800,384 1203.800,379.800 1204.800,375 1205.800,370.100 1206.800,365.300 1207.800,361 1208.800,357.500 1209.800,355.100 1210.800,353.800 1211.800,353.800 1212.800,355.100 1213.800,357.600 1214.800,361.200 1215.800,365.500 1216.800,370.200 1217.800,375.100 1218.800,379.900 1219.800,384.100 1220.800,387.400 1221.800,389.800 1222.800,390.900 1223.800,390.700 1224.800,389.200 1225.800,386.600 1226.800,383 1227.800,378.600 1228.800,373.800 1229.800,368.900 1230.800,364.300 1231.800,360.100 1232.800,356.900 1233.800,354.700 1234.800,353.700 1235.800,354 1236.800,355.600 1237.800,358.300 1238.800,362 1239.800,366.400 1240.800,371.200 1241.800,376.100 1242.800,380.800 1243.800,384.800 1244.800,388 1245.800,390.100 1246.800,390.900 1247.800,390.500 1248.800,388.800 1249.800,386 1250.800,382.200 1251.800,377.800 1252.800,373 1253.800,368.100 1254.800,363.500 1255.800,359.500 1256.800,356.400 1257.800,354.400 1258.800,353.700 1259.800,354.200 1260.800,356 1261.800,358.900 1262.800,362.700 1263.800,367.300 1264.800,372.100 1265.800,377.100 1266.800,381.600 1267.800,385.600 1268.800,388.500 1269.800,390.400 1270.800,390.900 1271.800,390.200 1272.800,388.100 1273.800,384.900 1274.800,380.800 1275.800,376.100 1276.800,371.100 1277.800,366.100 1278.800,361.700 1279.800,358 1280.800,355.300 1281.800,353.900 1282.800,353.800 1283.800,355 1284.800,357.500 1285.800,361 1286.800,365.300 1287.800,370.100 1288.800,375.100 1289.800,379.900 1290.800,384.100 1291.800,387.400 1292.800,389.800 1293.800,390.900 1294.800,390.700 1295.800,389.200 1296.800,386.600 1297.800,383 1298.800,378.700 1299.800,373.900 1300.800,369.100 1301.800,364.400 1302.800,360.300 1303.800,357 1304.800,354.800 1305.800,353.700 1306.800,353.900 1307.800,355.400 1308.800,358 1309.800,361.600 1310.800,366 1311.800,370.800 1312.800,375.700 1313.800,380.300 1314.800,384.400 1315.800,387.700 1316.800,389.900" fill="none" stroke="#f00" stroke-width="1.35" stroke-linejoin="round" shape-rendering="crispEdges" />
<polyline points="92.800,342 93.800,339.400 94.800,337.400 95.800,335.800 96.800,334.900 97.800,334.400 98.800,334.600 99.800,335.300 100.800,336.500 101.800,338.300 102.800,340.600 103.800,343.400 104.800,346.600 105.800,350.200 106.800,354.100 107.800,358.300 108.800,362.700 109.800,367.300 110.800,371.900 111.800,376.500 112.800,381.100 113.800,385.500 114.800,389.700 115.800,393.700 116.800,397.400 117.800,400.600 118.800,403.500 119.800,405.900 120.800,407.800 121.800,409.100 122.800,409.900 123.800,410.200 124.800,409.900 125.800,409 126.800,407.500 127.800,405.600 128.800,403.100 129.800,400.200 130.800,396.900 131.800,393.200 132.800,389.200 133.800,384.900 134.800,380.400 135.800,375.900 136.800,371.200 137.800,366.600 138.800,362.100 139.800,357.700 140.800,353.600 141.800,349.700 142.800,346.100 143.800,343 144.800,340.300 145.800,338 146.800,336.300 147.800,335.100 148.800,334.500 149.800,334.500 150.800,335 151.800,336 152.800,337.600 153.800,339.700 154.800,342.400 155.800,345.400 156.800,348.900 157.800,352.700 158.800,356.800 159.800,361.100 160.800,365.600 161.800,370.200 162.800,374.900 163.800,379.400 164.800,383.900 165.800,388.200 166.800,392.300 167.800,396.100 168.800,399.500 169.800,402.500 170.800,405.100 171.800,407.200 172.800,408.700 173.800,409.700 174.800,410.200 175.800,410 176.800,409.400 177.800,408.100 178.800,406.300 179.800,404.100 180.800,401.300 181.800,398.100 182.800,394.500 183.800,390.600 184.800,386.400 185.800,382.100 186.800,377.500 187.800,372.900 188.800,368.300 189.800,363.700 190.800,359.300 191.800,355 192.800,351 193.800,347.400 194.800,344.100 195.800,341.200 196.800,338.800 197.800,336.900 198.800,335.500 199.800,334.700 200.800,334.400 201.800,334.700 202.800,335.600 203.800,337 204.800,338.900 205.800,341.400 206.800,344.300 207.800,347.600 208.800,351.300 209.800,355.300 210.800,359.500 211.800,364 212.800,368.600 213.800,373.200 214.800,377.800 215.800,382.300 216.800,386.700 217.800,390.900 218.800,394.800 219.800,398.300 220.800,401.500 221.800,404.200 222.800,406.500 223.800,408.200 224.800,409.400 225.800,410.100 226.800,410.200 227.800,409.700 228.800,408.600 229.800,407 230.800,404.900 231.800,402.400 232.800,399.300 233.800,395.900 234.800,392.100 235.800,388 236.800,383.700 237.800,379.200 238.800,374.600 239.800,369.900 240.800,365.300 241.800,360.800 242.800,356.500 243.800,352.400 244.800,348.600 245.800,345.200 246.800,342.200 247.800,339.600 248.800,337.500 249.800,335.900 250.800,334.900 251.800,334.400 252.800,334.500 253.800,335.200 254.800,336.400 255.800,338.200 256.800,340.400 257.800,343.200 258.800,346.400 259.800,349.900 260.800,353.800 261.800,358 262.800,362.400 263.800,366.900 264.800,371.500 265.800,376.200 266.800,380.700 267.800,385.200 268.800,389.400 269.800,393.400 270.800,397.100 271.800,400.400 272.800,403.300 273.800,405.700 274.800,407.700 275.800,409.100 276.800,409.900 277.800,410.200 278.800,409.900 279.800,409.100 280.800,407.700 281.800,405.800 282.800,403.300 283.800,400.500 284.800,397.100 285.800,393.500 286.800,389.500 287.800,385.200 288.800,380.800 289.800,376.200 290.800,371.600 291.800,367 292.800,362.400 293.800,358 294.800,353.900 295.800,350 296.800,346.400 297.800,343.200 298.800,340.500 299.800,338.200 300.800,336.400 301.800,335.200 302.800,334.500 303.800,334.400 304.800,334.900 305.800,335.900 306.800,337.500 307.800,339.600 308.800,342.100 309.800,345.200 310.800,348.600 311.800,352.400 312.800,356.500 313.800,360.800 314.800,365.300 315.800,369.900 316.800,374.500 317.800,379.100 318.800,383.600 319.800,387.900 320.800,392 321.800,395.800 322.800,399.300 323.800,402.300 324.800,404.900 325.800,407 326.800,408.600 327.800,409.700 328.800,410.200 329.800,410.100 330.800,409.400 331.800,408.200 332.800,406.500 333.800,404.300 334.800,401.500 335.800,398.400 336.800,394.800 337.800,390.900 338.800,386.800 339.800,382.400 340.800,377.900 341.800,373.300 342.800,368.600 343.800,364 344.800,359.600 345.800,355.300 346.800,351.300 347.800,347.600 348.800,344.300 349.800,341.400 350.800,339 351.800,337 352.800,335.600 353.800,334.700 354.800,334.400 355.800,334.700 356.800,335.500 357.800,336.900 358.800,338.800 359.800,341.200 360.800,344 361.800,347.300 362.800,351 363.800,355 364.800,359.200 365.800,363.600 366.800,368.200 367.800,372.800 368.800,377.500 369.800,382 370.800,386.400 371.800,390.600 372.800,394.500 373.800,398.100 374.800,401.300 375.800,404 376.800,406.300 377.800,408.100 378.800,409.300 379.800,410 380.800,410.200 381.800,409.700 382.800,408.700 383.800,407.200 384.800,405.100 385.800,402.600 386.800,399.600 387.800,396.100 388.800,392.400 389.800,388.300 390.800,384 391.800,379.500 392.800,374.900 393.800,370.300 394.800,365.700 395.800,361.200 396.800,356.800 397.800,352.700 398.800,348.900 399.800,345.500 400.800,342.400 401.800,339.800 402.800,337.700 403.800,336 404.800,335 405.800,334.500 406.800,334.500 407.800,335.100 408.800,336.300 409.800,338 410.800,340.200 411.800,342.900 412.800,346.100 413.800,349.600 414.800,353.500 415.800,357.700 416.800,362 417.800,366.600 418.800,371.200 419.800,375.800 420.800,380.400 421.800,384.800 422.800,389.100 423.800,393.100 424.800,396.800 425.800,400.200 426.800,403.100 427.800,405.600 428.800,407.500 429.800,409 430.800,409.900 431.800,410.200 432.800,410 433.800,409.200 434.800,407.800 435.800,405.900 436.800,403.500 437.800,400.700 438.800,397.400 439.800,393.800 440.800,389.800 441.800,385.600 442.800,381.100 443.800,376.600 444.800,371.900 445.800,367.300 446.800,362.800 447.800,358.400 448.800,354.200 449.800,350.300 450.800,346.700 451.800,343.400 452.800,340.700 453.800,338.400 454.800,336.600 455.800,335.300 456.800,334.600 457.800,334.400 458.800,334.800 459.800,335.800 460.800,337.300 461.800,339.400 462.800,341.900 463.800,344.900 464.800,348.300 465.800,352.100 466.800,356.100 467.800,360.400 468.800,364.900 469.800,369.500 470.800,374.100 471.800,378.700 472.800,383.300 473.800,387.600 474.800,391.700 475.800,395.500 476.800,399 477.800,402.100 478.800,404.700 479.800,406.900 480.800,408.500 481.800,409.600 482.800,410.100 483.800,410.100 484.800,409.500 485.800,408.300 486.800,406.700 487.800,404.500 488.800,401.800 489.800,398.600 490.800,395.100 491.800,391.300 492.800,387.100 493.800,382.700 494.800,378.200 495.800,373.600 496.800,369 497.800,364.400 498.800,359.900 499.800,355.700 500.800,351.600 501.800,347.900 502.800,344.600 503.800,341.600 504.800,339.100 505.800,337.100 506.800,335.700 507.800,334.800 508.800,334.400 509.800,334.600 510.800,335.400 511.800,336.700 512.800,338.600 513.800,341 514.800,343.800 515.800,347 516.800,350.700 517.800,354.600 518.800,358.900 519.800,363.300 520.800,367.800 521.800,372.500 522.800,377.100 523.800,381.600 524.800,386.100 525.800,390.300 526.800,394.200 527.800,397.800 528.800,401 529.800,403.800 530.800,406.200 531.800,408 532.800,409.300 533.800,410 534.800,410.200 535.800,409.800 536.800,408.800 537.800,407.300 538.800,405.300 539.800,402.800 540.800,399.800 541.800,396.400 542.800,392.700 543.800,388.600 544.800,384.300 545.800,379.900 546.800,375.300 547.800,370.600 548.800,366 549.800,361.500 550.800,357.200 551.800,353 552.800,349.200 553.800,345.700 554.800,342.600 555.800,340 556.800,337.800 557.800,336.100 558.800,335 559.800,334.500 560.800,334.500 561.800,335.100 562.800,336.200 563.800,337.900 564.800,340.100 565.800,342.700 566.800,345.800 567.800,349.300 568.800,353.200 569.800,357.300 570.800,361.700 571.800,366.200 572.800,370.800 573.800,375.400 574.800,380 575.800,384.500 576.800,388.800 577.800,392.800 578.800,396.600 579.800,399.900 580.800,402.900 581.800,405.400 582.800,407.400 583.800,408.900 584.800,409.800 585.800,410.200 586.800,410 587.800,409.200 588.800,407.900 589.800,406.100 590.800,403.700 591.800,400.900 592.800,397.700 593.800,394.100 594.800,390.100 595.800,385.900 596.800,381.500 597.800,376.900 598.800,372.300 599.800,367.700 600.800,363.100 601.800,358.700 602.800,354.500 603.800,350.500 604.800,346.900 605.800,343.700 606.800,340.900 607.800,338.500 608.800,336.700 609.800,335.400 610.800,334.600 611.800,334.400 612.800,334.800 613.800,335.700 614.800,337.200 615.800,339.200 616.800,341.700 617.800,344.600 618.800,348 619.800,351.700 620.800,355.700 621.800,360 622.800,364.400 623.800,369 624.800,373.600 625.800,378.200 626.800,382.700 627.800,387 628.800,391.100 629.800,395 630.800,398.500 631.800,401.600 632.800,404.300 633.800,406.500 634.800,408.300 635.800,409.400 636.800,410.100 637.800,410.200 638.800,409.700 639.800,408.600 640.800,407.100 641.800,405 642.800,402.400 643.800,399.300 644.800,395.900 645.800,392.100 646.800,388 647.800,383.700 648.800,379.200 649.800,374.600 650.800,369.900 651.800,365.300 652.800,360.800 653.800,356.500 654.800,352.300 655.800,348.500 656.800,345.100 657.800,342 658.800,339.500 659.800,337.400 660.800,335.800 661.800,334.800 662.800,334.400 663.800,334.600 664.800,335.300 665.800,336.500 666.800,338.100 667.800,340.100 668.800,342.500 669.800,345.300 670.800,348.500 671.800,352 672.800,356 673.800,360.300 674.800,365 675.800,370 676.800,375.300 677.800,380.400 678.800,385.100 679.800,389.400 680.800,393.500 681.800,397 682.800,399.300 683.800,400 684.800,398.900 685.800,396 686.800,391.800 687.800,386.700 688.800,381.400 689.800,375.900 690.800,370.600 691.800,365.700 692.800,361.200 693.800,357.400 694.800,354.400 695.800,352.400 696.800,351.400 697.800,351.500 698.800,352.800 699.800,355.300 700.800,358.800 701.800,363.200 702.800,368.100 703.800,373.200 704.800,378.100 705.800,382.600 706.800,386.200 707.800,389 708.800,390.800 709.800,391.600 710.800,391.300 711.800,390 712.800,387.600 713.800,384.300 714.800,380.100 715.800,375.200 716.800,369.900 717.800,364.800 718.800,360.200 719.800,356.700 720.800,354.400 721.800,353.500 722.800,353.900 723.800,355.400 724.800,358 725.800,361.300 726.800,365.300 727.800,369.600 728.800,374.200 729.800,378.700 730.800,382.900 731.800,386.400 732.800,389.100 733.800,390.700 734.800,391 735.800,390 736.800,387.800 737.800,384.500 738.800,380.300 739.800,375.600 740.800,370.700 741.800,365.800 742.800,361.400 743.800,357.700 744.800,355.200 745.800,353.800 746.800,353.800 747.800,355.200 748.800,357.900 749.800,361.700 750.800,366.300 751.800,371.400 752.800,376.500 753.800,381.200 754.800,385.200 755.800,388.300 756.800,390.200 757.800,391 758.800,390.400 759.800,388.700 760.800,385.900 761.800,382.100 762.800,377.500 763.800,372.600 764.800,367.700 765.800,363.100 766.800,359.100 767.800,356 768.800,354.200 769.800,353.700 770.800,354.500 771.800,356.600 772.800,359.900 773.800,364.200 774.800,369 775.800,374 776.800,378.900 777.800,383.300 778.800,386.800 779.800,389.400 780.800,390.700 781.800,390.800 782.800,389.700 783.800,387.400 784.800,384.100 785.800,379.900 786.800,375.100 787.800,370.100 788.800,365.300 789.800,360.900 790.800,357.400 791.800,354.900 792.800,353.800 793.800,353.900 794.800,355.300 795.800,358 796.800,361.600 797.800,366.100 798.800,370.900 799.800,375.900 800.800,380.600 801.800,384.700 802.800,387.900 803.800,390.100 804.800,390.900 805.800,390.500 806.800,388.800 807.800,385.900 808.800,382 809.800,377.500 810.800,372.600 811.800,367.700 812.800,363.100 813.800,359.100 814.800,356.100 815.800,354.300 816.800,353.600 817.800,354.400 818.800,356.300 819.800,359.400 820.800,363.400 821.800,368 822.800,372.900 823.800,377.800 824.800,382.300 825.800,386.100 826.800,388.900 827.800,390.500 828.800,390.900 829.800,390 830.800,387.800 831.800,384.600 832.800,380.500 833.800,375.800 834.800,370.900 835.800,366.100 836.800,361.700 837.800,358 838.800,355.400 839.800,353.900 840.800,353.700 841.800,354.800 842.800,357.200 843.800,360.600 844.800,364.800 845.800,369.500 846.800,374.400 847.800,379.200 848.800,383.500 849.800,387 850.800,389.500 851.800,390.800 852.800,390.800 853.800,389.500 854.800,387 855.800,383.500 856.800,379.200 857.800,374.400 858.800,369.500 859.800,364.700 860.800,360.500 861.800,357.200 862.800,354.800 863.800,353.700 864.800,353.900 865.800,355.400 866.800,358.100 867.800,361.700 868.800,366.100 869.800,370.900 870.800,375.900 871.800,380.500 872.800,384.600 873.800,387.900 874.800,390 875.800,390.900 876.800,390.500 877.800,388.900 878.800,386 879.800,382.200 880.800,377.800 881.800,372.900 882.800,368 883.800,363.400 884.800,359.400 885.800,356.300 886.800,354.300 887.800,353.600 888.800,354.300 889.800,356.200 890.800,359.200 891.800,363.100 892.800,367.700 893.800,372.600 894.800,377.500 895.800,382 896.800,385.900 897.800,388.800 898.800,390.500 899.800,390.900 900.800,390.100 901.800,387.900 902.800,384.700 903.800,380.600 904.800,375.900 905.800,370.900 906.800,366.100 907.800,361.600 908.800,358 909.800,355.300 910.800,353.900 911.800,353.800 912.800,354.900 913.800,357.400 914.800,360.900 915.800,365.200 916.800,370 917.800,375 918.800,379.800 919.800,384.100 920.800,387.500 921.800,389.800 922.800,390.900 923.800,390.600 924.800,389 925.800,386.200 926.800,382.400 927.800,377.900 928.800,372.900 929.800,368 930.800,363.300 931.800,359.300 932.800,356.200 933.800,354.300 934.800,353.600 935.800,354.300 936.800,356.200 937.800,359.300 938.800,363.200 939.800,367.800 940.800,372.600 941.800,377.500 942.800,382 943.800,385.800 944.800,388.700 945.800,390.400 946.800,390.900 947.800,390.200 948.800,388.200 949.800,385.100 950.800,381.100 951.800,376.500 952.800,371.700 953.800,366.800 954.800,362.300 955.800,358.600 956.800,355.700 957.800,354.100 958.800,353.700 959.800,354.600 960.800,356.800 961.800,360.100 962.800,364.200 963.800,369 964.800,374 965.800,378.900 966.800,383.300 967.800,386.900 968.800,389.500 969.800,390.800 970.800,390.800 971.800,389.400 972.800,386.900 973.800,383.200 974.800,378.800 975.800,373.900 976.800,368.900 977.800,364.200 978.800,360 979.800,356.800 980.800,354.600 981.800,353.700 982.800,354.100 983.800,355.700 984.800,358.600 985.800,362.300 986.800,366.800 987.800,371.600 988.800,376.500 989.800,381 990.800,385 991.800,388.100 992.800,390.100 993.800,390.900 994.800,390.500 995.800,388.800 996.800,385.900 997.800,382.200 998.800,377.700 999.800,372.900 1000.800,368.100 1001.800,363.500 1002.800,359.500 1003.800,356.400 1004.800,354.400 1005.800,353.700 1006.800,354.200 1007.800,355.900 1008.800,358.900 1009.800,362.700 1010.800,367.200 1011.800,372.100 1012.800,377 1013.800,381.600 1014.800,385.500 1015.800,388.500 1016.800,390.400 1017.800,391 1018.800,390.200 1019.800,388.300 1020.800,385.200 1021.800,381.200 1022.800,376.600 1023.800,371.700 1024.800,366.800 1025.800,362.300 1026.800,358.500 1027.800,355.700 1028.800,354.100 1029.800,353.700 1030.800,354.600 1031.800,356.700 1032.800,359.900 1033.800,364 1034.800,368.700 1035.800,373.600 1036.800,378.400 1037.800,382.800 1038.800,386.400 1039.800,389.100 1040.800,390.600 1041.800,390.900 1042.800,389.900 1043.800,387.600 1044.800,384.300 1045.800,380.200 1046.800,375.500 1047.800,370.600 1048.800,365.800 1049.800,361.500 1050.800,357.900 1051.800,355.300 1052.800,353.900 1053.800,353.800 1054.800,354.900 1055.800,357.300 1056.800,360.700 1057.800,364.900 1058.800,369.600 1059.800,374.500 1060.800,379.300 1061.800,383.600 1062.800,387.100 1063.800,389.500 1064.800,390.800 1065.800,390.800 1066.800,389.500 1067.800,387 1068.800,383.500 1069.800,379.200 1070.800,374.400 1071.800,369.500 1072.800,364.800 1073.800,360.600 1074.800,357.200 1075.800,354.900 1076.800,353.700 1077.800,353.900 1078.800,355.300 1079.800,358 1080.800,361.600 1081.800,365.900 1082.800,370.700 1083.800,375.700 1084.800,380.300 1085.800,384.400 1086.800,387.700 1087.800,389.900 1088.800,390.900 1089.800,390.600 1090.800,389 1091.800,386.300 1092.800,382.500 1093.800,378.100 1094.800,373.300 1095.800,368.400 1096.800,363.800 1097.800,359.700 1098.800,356.600 1099.800,354.500 1100.800,353.700 1101.800,354.100 1102.800,355.900 1103.800,358.700 1104.800,362.600 1105.800,367 1106.800,371.900 1107.800,376.800 1108.800,381.400 1109.800,385.300 1110.800,388.400 1111.800,390.300 1112.800,391 1113.800,390.300 1114.800,388.400 1115.800,385.400 1116.800,381.500 1117.800,376.900 1118.800,372 1119.800,367.200 1120.800,362.700 1121.800,358.800 1122.800,355.900 1123.800,354.200 1124.800,353.700 1125.800,354.500 1126.800,356.500 1127.800,359.700 1128.800,363.700 1129.800,368.300 1130.800,373.200 1131.800,378.100 1132.800,382.500 1133.800,386.300 1134.800,389 1135.800,390.600 1136.800,390.900 1137.800,389.900 1138.800,387.700 1139.800,384.400 1140.800,380.200 1141.800,375.500 1142.800,370.600 1143.800,365.800 1144.800,361.400 1145.800,357.800 1146.800,355.300 1147.800,353.900 1148.800,353.800 1149.800,355 1150.800,357.400 1151.800,360.900 1152.800,365.100 1153.800,369.900 1154.800,374.800 1155.800,379.600 1156.800,383.800 1157.800,387.300 1158.800,389.700 1159.800,390.800 1160.800,390.700 1161.800,389.300 1162.800,386.700 1163.800,383 1164.800,378.600 1165.800,373.800 1166.800,368.800 1167.800,364.100 1168.800,360 1169.800,356.800 1170.800,354.600 1171.800,353.700 1172.800,354.100 1173.800,355.800 1174.800,358.600 1175.800,362.400 1176.800,367 1177.800,371.900 1178.800,376.800 1179.800,381.500 1180.800,385.400 1181.800,388.500 1182.800,390.400 1183.800,390.900 1184.800,390.200 1185.800,388.200 1186.800,385.100 1187.800,381 1188.800,376.300 1189.800,371.400 1190.800,366.500 1191.800,362 1192.800,358.300 1193.800,355.500 1194.800,354 1195.800,353.700 1196.800,354.800 1197.800,357 1198.800,360.400 1199.800,364.600 1200.800,369.300 1201.800,374.200 1202.800,379 1203.800,383.400 1204.800,386.900 1205.800,389.400 1206.800,390.800 1207.800,390.800 1208.800,389.600 1209.800,387.100 1210.800,383.600 1211.800,379.300 1212.800,374.600 1213.800,369.700 1214.800,364.900 1215.800,360.700 1216.800,357.300 1217.800,354.900 1218.800,353.800 1219.800,353.900 1220.800,355.300 1221.800,357.900 1222.800,361.500 1223.800,365.800 1224.800,370.600 1225.800,375.500 1226.800,380.200 1227.800,384.300 1228.800,387.600 1229.800,389.900 1230.800,390.900 1231.800,390.600 1232.800,389.100 1233.800,386.400 1234.800,382.700 1235.800,378.300 1236.800,373.500 1237.800,368.600 1238.800,364 1239.800,359.900 1240.800,356.700 1241.800,354.600 1242.800,353.700 1243.800,354.100 1244.800,355.700 1245.800,358.500 1246.800,362.300 1247.800,366.700 1248.800,371.500 1249.800,376.400 1250.800,381 1251.800,385 1252.800,388.100 1253.800,390.100 1254.800,390.900 1255.800,390.500 1256.800,388.700 1257.800,385.800 1258.800,382 1259.800,377.500 1260.800,372.700 1261.800,367.800 1262.800,363.200 1263.800,359.300 1264.800,356.200 1265.800,354.300 1266.800,353.600 1267.800,354.300 1268.800,356.200 1269.800,359.300 1270.800,363.300 1271.800,368 1272.800,373 1273.800,377.900 1274.800,382.400 1275.800,386.200 1276.800,389 1277.800,390.600 1278.800,390.900 1279.800,389.800 1280.800,387.500 1281.800,384 1282.800,379.700 1283.800,374.900 1284.800,369.900 1285.800,365.100 1286.800,360.800 1287.800,357.300 1288.800,354.900 1289.800,353.800 1290.800,353.900 1291.800,355.300 1292.800,357.900 1293.800,361.500 1294.800,365.800 1295.800,370.600 1296.800,375.500 1297.800,380.200 1298.800,384.300 1299.800,387.600 1300.800,389.800 1301.800,390.900 1302.800,390.700 1303.800,389.200 1304.800,386.600 1305.800,383 1306.800,378.700 1307.800,373.900 1308.800,369 1309.800,364.400 1310.800,360.300 1311.800,357 1312.800,354.700 1313.800,353.700 1314.800,354 1315.800,355.500 1316.800,358.200" fill="none" stroke="#00f" stroke-width="1.35" stroke-linejoin="round" shape-rendering="crispEdges" />
<polyline points="92.800,407.100 93.800,405 94.800,402.500 95.800,399.400 96.800,396 97.800,392.200 98.800,388.200 99.800,383.800 100.800,379.400 101.800,374.800 102.800,370.100 103.800,365.500 104.800,361 105.800,356.700 106.800,352.600 107.800,348.800 108.800,345.300 109.800,342.300 110.800,339.700 111.800,337.600 112.800,336 113.800,334.900 114.800,334.500 115.800,334.500 116.800,335.200 117.800,336.400 118.800,338.100 119.800,340.300 120.800,343.100 121.800,346.200 122.800,349.800 123.800,353.600 124.800,357.800 125.800,362.200 126.800,366.700 127.800,371.300 128.800,376 129.800,380.500 130.800,385 131.800,389.200 132.800,393.300 133.800,397 134.800,400.300 135.800,403.200 136.800,405.600 137.800,407.600 138.800,409 139.800,409.900 140.800,410.200 141.800,409.900 142.800,409.100 143.800,407.700 144.800,405.800 145.800,403.400 146.800,400.600 147.800,397.300 148.800,393.600 149.800,389.700 150.800,385.400 151.800,381 152.800,376.400 153.800,371.800 154.800,367.200 155.800,362.600 156.800,358.200 157.800,354 158.800,350.100 159.800,346.500 160.800,343.300 161.800,340.600 162.800,338.300 163.800,336.500 164.800,335.300 165.800,334.600 166.800,334.400 167.800,334.900 168.800,335.900 169.800,337.400 170.800,339.500 171.800,342 172.800,345 173.800,348.400 174.800,352.200 175.800,356.300 176.800,360.600 177.800,365.100 178.800,369.700 179.800,374.300 180.800,378.900 181.800,383.400 182.800,387.700 183.800,391.800 184.800,395.700 185.800,399.100 186.800,402.200 187.800,404.800 188.800,406.900 189.800,408.600 190.800,409.600 191.800,410.100 192.800,410.100 193.800,409.500 194.800,408.300 195.800,406.600 196.800,404.400 197.800,401.700 198.800,398.500 199.800,395 200.800,391.100 201.800,387 202.800,382.600 203.800,378.100 204.800,373.400 205.800,368.800 206.800,364.200 207.800,359.800 208.800,355.500 209.800,351.500 210.800,347.800 211.800,344.400 212.800,341.500 213.800,339.100 214.800,337.100 215.800,335.600 216.800,334.700 217.800,334.400 218.800,334.600 219.800,335.400 220.800,336.800 221.800,338.700 222.800,341 223.800,343.900 224.800,347.200 225.800,350.800 226.800,354.800 227.800,359 228.800,363.400 229.800,368 230.800,372.600 231.800,377.300 232.800,381.800 233.800,386.200 234.800,390.400 235.800,394.300 236.800,397.900 237.800,401.100 238.800,403.900 239.800,406.200 240.800,408 241.800,409.300 242.800,410 243.800,410.200 244.800,409.800 245.800,408.800 246.800,407.300 247.800,405.200 248.800,402.700 249.800,399.700 250.800,396.300 251.800,392.500 252.800,388.500 253.800,384.200 254.800,379.700 255.800,375.100 256.800,370.500 257.800,365.900 258.800,361.400 259.800,357 260.800,352.900 261.800,349.100 262.800,345.600 263.800,342.500 264.800,339.900 265.800,337.700 266.800,336.100 267.800,335 268.800,334.500 269.800,334.500 270.800,335.100 271.800,336.200 272.800,337.900 273.800,340.100 274.800,342.800 275.800,345.900 276.800,349.500 277.800,353.300 278.800,357.500 279.800,361.800 280.800,366.400 281.800,371 282.800,375.600 283.800,380.200 284.800,384.600 285.800,388.900 286.800,393 287.800,396.700 288.800,400 289.800,403 290.800,405.500 291.800,407.500 292.800,408.900 293.800,409.800 294.800,410.200 295.800,410 296.800,409.200 297.800,407.900 298.800,406 299.800,403.700 300.800,400.800 301.800,397.600 302.800,393.900 303.800,390 304.800,385.700 305.800,381.300 306.800,376.800 307.800,372.100 308.800,367.500 309.800,363 310.800,358.600 311.800,354.400 312.800,350.400 313.800,346.800 314.800,343.600 315.800,340.800 316.800,338.400 317.800,336.600 318.800,335.300 319.800,334.600 320.800,334.400 321.800,334.800 322.800,335.800 323.800,337.300 324.800,339.300 325.800,341.800 326.800,344.800 327.800,348.200 328.800,351.900 329.800,356 330.800,360.200 331.800,364.700 332.800,369.300 333.800,373.900 334.800,378.500 335.800,383.100 336.800,387.400 337.800,391.500 338.800,395.400 339.800,398.900 340.800,402 341.800,404.600 342.800,406.800 343.800,408.400 344.800,409.600 345.800,410.100 346.800,410.100 347.800,409.500 348.800,408.400 349.800,406.700 350.800,404.600 351.800,401.900 352.800,398.800 353.800,395.300 354.800,391.400 355.800,387.300 356.800,382.900 357.800,378.400 358.800,373.800 359.800,369.200 360.800,364.600 361.800,360.100 362.800,355.800 363.800,351.800 364.800,348.100 365.800,344.700 366.800,341.700 367.800,339.200 368.800,337.200 369.800,335.700 370.800,334.800 371.800,334.400 372.800,334.600 373.800,335.400 374.800,336.700 375.800,338.500 376.800,340.800 377.800,343.700 378.800,346.900 379.800,350.500 380.800,354.500 381.800,358.700 382.800,363.100 383.800,367.700 384.800,372.300 385.800,376.900 386.800,381.500 387.800,385.900 388.800,390.100 389.800,394 390.800,397.700 391.800,400.900 392.800,403.700 393.800,406.100 394.800,407.900 395.800,409.200 396.800,410 397.800,410.200 398.800,409.800 399.800,408.900 400.800,407.400 401.800,405.400 402.800,402.900 403.800,399.900 404.800,396.600 405.800,392.800 406.800,388.800 407.800,384.500 408.800,380.100 409.800,375.500 410.800,370.800 411.800,366.200 412.800,361.700 413.800,357.300 414.800,353.200 415.800,349.400 416.800,345.900 417.800,342.700 418.800,340.100 419.800,337.900 420.800,336.200 421.800,335.100 422.800,334.500 423.800,334.500 424.800,335 425.800,336.100 426.800,337.800 427.800,340 428.800,342.600 429.800,345.700 430.800,349.200 431.800,353 432.800,357.100 433.800,361.500 434.800,366 435.800,370.600 436.800,375.200 437.800,379.800 438.800,384.300 439.800,388.600 440.800,392.700 441.800,396.400 442.800,399.800 443.800,402.800 444.800,405.300 445.800,407.300 446.800,408.800 447.800,409.800 448.800,410.200 449.800,410 450.800,409.300 451.800,408 452.800,406.200 453.800,403.900 454.800,401.100 455.800,397.800 456.800,394.200 457.800,390.300 458.800,386.100 459.800,381.700 460.800,377.100 461.800,372.500 462.800,367.900 463.800,363.300 464.800,358.900 465.800,354.700 466.800,350.700 467.800,347.100 468.800,343.800 469.800,341 470.800,338.600 471.800,336.700 472.800,335.400 473.800,334.600 474.800,334.400 475.800,334.800 476.800,335.700 477.800,337.100 478.800,339.100 479.800,341.600 480.800,344.500 481.800,347.900 482.800,351.600 483.800,355.600 484.800,359.900 485.800,364.400 486.800,369 487.800,373.600 488.800,378.200 489.800,382.700 490.800,387.100 491.800,391.200 492.800,395.100 493.800,398.600 494.800,401.700 495.800,404.400 496.800,406.600 497.800,408.300 498.800,409.500 499.800,410.100 500.800,410.100 501.800,409.600 502.800,408.500 503.800,406.900 504.800,404.700 505.800,402.100 506.800,399 507.800,395.600 508.800,391.700 509.800,387.600 510.800,383.300 511.800,378.800 512.800,374.200 513.800,369.500 514.800,364.900 515.800,360.500 516.800,356.200 517.800,352.100 518.800,348.300 519.800,344.900 520.800,341.900 521.800,339.400 522.800,337.400 523.800,335.800 524.800,334.800 525.800,334.400 526.800,334.600 527.800,335.300 528.800,336.500 529.800,338.300 530.800,340.700 531.800,343.400 532.800,346.600 533.800,350.200 534.800,354.200 535.800,358.300 536.800,362.800 537.800,367.300 538.800,371.900 539.800,376.500 540.800,381.100 541.800,385.500 542.800,389.800 543.800,393.700 544.800,397.400 545.800,400.700 546.800,403.500 547.800,405.900 548.800,407.800 549.800,409.100 550.800,409.900 551.800,410.200 552.800,409.900 553.800,409 554.800,407.500 555.800,405.600 556.800,403.100 557.800,400.200 558.800,396.800 559.800,393.100 560.800,389.100 561.800,384.900 562.800,380.400 563.800,375.800 564.800,371.200 565.800,366.600 566.800,362.100 567.800,357.700 568.800,353.500 569.800,349.600 570.800,346.100 571.800,343 572.800,340.300 573.800,338 574.800,336.300 575.800,335.100 576.800,334.500 577.800,334.500 578.800,335 579.800,336 580.800,337.600 581.800,339.800 582.800,342.400 583.800,345.400 584.800,348.900 585.800,352.700 586.800,356.800 587.800,361.200 588.800,365.700 589.800,370.300 590.800,374.900 591.800,379.500 592.800,384 593.800,388.300 594.800,392.400 595.800,396.100 596.800,399.500 597.800,402.600 598.800,405.100 599.800,407.200 600.800,408.700 601.800,409.700 602.800,410.200 603.800,410 604.800,409.400 605.800,408.100 606.800,406.300 607.800,404 608.800,401.300 609.800,398.100 610.800,394.500 611.800,390.600 612.800,386.400 613.800,382 614.800,377.500 615.800,372.900 616.800,368.300 617.800,363.700 618.800,359.300 619.800,355.100 620.800,351.100 621.800,347.400 622.800,344.200 623.800,341.300 624.800,338.900 625.800,337 626.800,335.600 627.800,334.700 628.800,334.400 629.800,334.700 630.800,335.500 631.800,336.900 632.800,338.700 633.800,341.100 634.800,344 635.800,347.200 636.800,350.900 637.800,354.800 638.800,359 639.800,363.500 640.800,368 641.800,372.600 642.800,377.200 643.800,381.800 644.800,386.200 645.800,390.400 646.800,394.300 647.800,397.900 648.800,401.100 649.800,403.900 650.800,406.200 651.800,408 652.800,409.300 653.800,410 654.800,410.200 655.800,409.700 656.800,408.700 657.800,407.200 658.800,405.100 659.800,402.500 660.800,399.400 661.800,395.900 662.800,392.100 663.800,387.900 664.800,383.700 665.800,379.500 666.800,375.300 667.800,371.100 668.800,366.900 669.800,362.700 670.800,358.700 671.800,354.700 672.800,350.900 673.800,347.200 674.800,343.800 675.800,340.700 676.800,338.700 677.800,338.400 678.800,338.800 679.800,340 680.800,342.100 681.800,345.400 682.800,350.200 683.800,356.200 684.800,363 685.800,370.100 686.800,376.800 687.800,382.600 688.800,387.200 689.800,390.800 690.800,393.200 691.800,394.500 692.800,394.700 693.800,393.800 694.800,391.900 695.800,389.100 696.800,385.400 697.800,381 698.800,376 699.800,370.900 700.800,365.800 701.800,361.200 702.800,357.400 703.800,354.600 704.800,353 705.800,352.600 706.800,353.400 707.800,355.300 708.800,358 709.800,361.500 710.800,365.500 711.800,370 712.800,374.600 713.800,379.200 714.800,383.500 715.800,387.200 716.800,389.800 717.800,391.100 718.800,391 719.800,389.300 720.800,386.400 721.800,382.600 722.800,378.200 723.800,373.600 724.800,368.900 725.800,364.600 726.800,360.700 727.800,357.600 728.800,355.200 729.800,353.800 730.800,353.600 731.800,354.600 732.800,356.800 733.800,360 734.800,364.100 735.800,368.700 736.800,373.700 737.800,378.500 738.800,382.900 739.800,386.600 740.800,389.200 741.800,390.700 742.800,390.900 743.800,389.700 744.800,387.300 745.800,383.700 746.800,379.300 747.800,374.400 748.800,369.200 749.800,364.300 750.800,360 751.800,356.600 752.800,354.500 753.800,353.600 754.800,354.200 755.800,356 756.800,358.800 757.800,362.600 758.800,367 759.800,371.800 760.800,376.600 761.800,381.200 762.800,385.200 763.800,388.300 764.800,390.300 765.800,391 766.800,390.300 767.800,388.400 768.800,385.200 769.800,381.200 770.800,376.500 771.800,371.400 772.800,366.400 773.800,361.800 774.800,358.100 775.800,355.300 776.800,353.900 777.800,353.800 778.800,354.900 779.800,357.300 780.800,360.600 781.800,364.700 782.800,369.400 783.800,374.200 784.800,379 785.800,383.300 786.800,386.900 787.800,389.400 788.800,390.800 789.800,390.800 790.800,389.500 791.800,386.900 792.800,383.300 793.800,378.900 794.800,374.100 795.800,369.100 796.800,364.400 797.800,360.200 798.800,356.900 799.800,354.700 800.800,353.700 801.800,354 802.800,355.700 803.800,358.500 804.800,362.300 805.800,366.800 806.800,371.700 807.800,376.600 808.800,381.200 809.800,385.200 810.800,388.300 811.800,390.300 812.800,391 813.800,390.300 814.800,388.400 815.800,385.400 816.800,381.500 817.800,376.900 818.800,372 819.800,367.100 820.800,362.600 821.800,358.700 822.800,355.800 823.800,354.100 824.800,353.700 825.800,354.500 826.800,356.600 827.800,359.800 828.800,363.900 829.800,368.500 830.800,373.500 831.800,378.300 832.800,382.700 833.800,386.400 834.800,389.100 835.800,390.600 836.800,390.900 837.800,389.800 838.800,387.600 839.800,384.200 840.800,380 841.800,375.300 842.800,370.400 843.800,365.600 844.800,361.300 845.800,357.700 846.800,355.200 847.800,353.800 848.800,353.800 849.800,355 850.800,357.500 851.800,360.900 852.800,365.200 853.800,370 854.800,374.900 855.800,379.700 856.800,383.900 857.800,387.300 858.800,389.700 859.800,390.800 860.800,390.700 861.800,389.300 862.800,386.700 863.800,383.100 864.800,378.700 865.800,373.900 866.800,369 867.800,364.300 868.800,360.200 869.800,356.900 870.800,354.700 871.800,353.700 872.800,354 873.800,355.600 874.800,358.400 875.800,362.100 876.800,366.600 877.800,371.400 878.800,376.400 879.800,381 880.800,385 881.800,388.200 882.800,390.200 883.800,390.900 884.800,390.400 885.800,388.600 886.800,385.600 887.800,381.800 888.800,377.200 889.800,372.300 890.800,367.400 891.800,362.800 892.800,358.900 893.800,356 894.800,354.200 895.800,353.700 896.800,354.400 897.800,356.500 898.800,359.600 899.800,363.700 900.800,368.400 901.800,373.300 902.800,378.200 903.800,382.600 904.800,386.400 905.800,389.100 906.800,390.600 907.800,390.900 908.800,389.800 909.800,387.500 910.800,384.100 911.800,379.800 912.800,375.100 913.800,370.100 914.800,365.200 915.800,360.900 916.800,357.400 917.800,355 918.800,353.800 919.800,353.900 920.800,355.400 921.800,358 922.800,361.800 923.800,366.200 924.800,371.100 925.800,376.100 926.800,380.800 927.800,384.900 928.800,388.100 929.800,390.200 930.800,390.900 931.800,390.400 932.800,388.500 933.800,385.600 934.800,381.600 935.800,377.100 936.800,372.200 937.800,367.300 938.800,362.800 939.800,358.900 940.800,356 941.800,354.200 942.800,353.700 943.800,354.400 944.800,356.400 945.800,359.400 946.800,363.400 947.800,368 948.800,372.800 949.800,377.700 950.800,382.100 951.800,385.900 952.800,388.800 953.800,390.500 954.800,390.900 955.800,390.100 956.800,388 957.800,384.800 958.800,380.800 959.800,376.100 960.800,371.100 961.800,366.200 962.800,361.800 963.800,358.100 964.800,355.400 965.800,353.900 966.800,353.800 967.800,354.900 968.800,357.400 969.800,360.900 970.800,365.300 971.800,370.100 972.800,375.100 973.800,379.900 974.800,384.200 975.800,387.600 976.800,389.900 977.800,390.900 978.800,390.600 979.800,389 980.800,386.200 981.800,382.500 982.800,378 983.800,373.200 984.800,368.300 985.800,363.600 986.800,359.600 987.800,356.500 988.800,354.500 989.800,353.700 990.800,354.100 991.800,355.800 992.800,358.700 993.800,362.400 994.800,366.900 995.800,371.700 996.800,376.500 997.800,381.100 998.800,385 999.800,388.100 1000.800,390.100 1001.800,390.900 1002.800,390.500 1003.800,388.700 1004.800,385.900 1005.800,382 1006.800,377.600 1007.800,372.700 1008.800,367.800 1009.800,363.200 1010.800,359.300 1011.800,356.200 1012.800,354.300 1013.800,353.600 1014.800,354.300 1015.800,356.200 1016.800,359.200 1017.800,363.200 1018.800,367.800 1019.800,372.700 1020.800,377.500 1021.800,382.100 1022.800,385.900 1023.800,388.800 1024.800,390.500 1025.800,390.900 1026.800,390.100 1027.800,388 1028.800,384.800 1029.800,380.800 1030.800,376.100 1031.800,371.200 1032.800,366.400 1033.800,362 1034.800,358.300 1035.800,355.600 1036.800,354 1037.800,353.700 1038.800,354.700 1039.800,356.900 1040.800,360.200 1041.800,364.300 1042.800,369 1043.800,373.900 1044.800,378.700 1045.800,383 1046.800,386.600 1047.800,389.200 1048.800,390.700 1049.800,390.900 1050.800,389.800 1051.800,387.400 1052.800,384.100 1053.800,379.900 1054.800,375.200 1055.800,370.200 1056.800,365.500 1057.800,361.200 1058.800,357.600 1059.800,355.100 1060.800,353.800 1061.800,353.800 1062.800,355.100 1063.800,357.500 1064.800,361 1065.800,365.200 1066.800,370 1067.800,374.900 1068.800,379.700 1069.800,383.900 1070.800,387.300 1071.800,389.700 1072.800,390.800 1073.800,390.700 1074.800,389.300 1075.800,386.800 1076.800,383.200 1077.800,378.800 1078.800,374 1079.800,369.100 1080.800,364.400 1081.800,360.300 1082.800,357 1083.800,354.700 1084.800,353.700 1085.800,354 1086.800,355.500 1087.800,358.200 1088.800,361.900 1089.800,366.300 1090.800,371.100 1091.800,376 1092.800,380.700 1093.800,384.700 1094.800,387.900 1095.800,390.100 1096.800,390.900 1097.800,390.500 1098.800,388.800 1099.800,386 1100.800,382.200 1101.800,377.700 1102.800,372.900 1103.800,368 1104.800,363.400 1105.800,359.400 1106.800,356.300 1107.800,354.400 1108.800,353.700 1109.800,354.200 1110.800,356.100 1111.800,359 1112.800,362.900 1113.800,367.500 1114.800,372.300 1115.800,377.200 1116.800,381.700 1117.800,385.600 1118.800,388.600 1119.800,390.400 1120.800,390.900 1121.800,390.200 1122.800,388.200 1123.800,385.100 1124.800,381.100 1125.800,376.500 1126.800,371.600 1127.800,366.700 1128.800,362.300 1129.800,358.500 1130.800,355.700 1131.800,354.100 1132.800,353.700 1133.800,354.600 1134.800,356.800 1135.800,360 1136.800,364.100 1137.800,368.800 1138.800,373.700 1139.800,378.600 1140.800,382.900 1141.800,386.600 1142.800,389.200 1143.800,390.700 1144.800,390.900 1145.800,389.700 1146.800,387.400 1147.800,384 1148.800,379.700 1149.800,375 1150.800,370.100 1151.800,365.300 1152.800,361 1153.800,357.500 1154.800,355 1155.800,353.800 1156.800,353.800 1157.800,355.200 1158.800,357.700 1159.800,361.300 1160.800,365.700 1161.800,370.500 1162.800,375.400 1163.800,380.200 1164.800,384.300 1165.800,387.700 1166.800,389.900 1167.800,390.900 1168.800,390.600 1169.800,389 1170.800,386.200 1171.800,382.500 1172.800,378 1173.800,373.100 1174.800,368.200 1175.800,363.500 1176.800,359.500 1177.800,356.400 1178.800,354.400 1179.800,353.600 1180.800,354.300 1181.800,356.200 1182.800,359.200 1183.800,363.200 1184.800,367.800 1185.800,372.800 1186.800,377.700 1187.800,382.200 1188.800,386.100 1189.800,388.900 1190.800,390.600 1191.800,390.900 1192.800,390 1193.800,387.800 1194.800,384.500 1195.800,380.300 1196.800,375.600 1197.800,370.700 1198.800,365.800 1199.800,361.500 1200.800,357.900 1201.800,355.300 1202.800,353.900 1203.800,353.800 1204.800,355 1205.800,357.400 1206.800,360.800 1207.800,365 1208.800,369.800 1209.800,374.700 1210.800,379.500 1211.800,383.700 1212.800,387.200 1213.800,389.600 1214.800,390.800 1215.800,390.700 1216.800,389.400 1217.800,386.800 1218.800,383.300 1219.800,379 1220.800,374.200 1221.800,369.300 1222.800,364.600 1223.800,360.400 1224.800,357.100 1225.800,354.800 1226.800,353.700 1227.800,353.900 1228.800,355.400 1229.800,358.100 1230.800,361.800 1231.800,366.100 1232.800,370.900 1233.800,375.800 1234.800,380.500 1235.800,384.600 1236.800,387.800 1237.800,390 1238.800,390.900 1239.800,390.600 1240.800,389 1241.800,386.200 1242.800,382.500 1243.800,378 1244.800,373.200 1245.800,368.300 1246.800,363.700 1247.800,359.700 1248.800,356.600 1249.800,354.500 1250.800,353.700 1251.800,354.100 1252.800,355.800 1253.800,358.700 1254.800,362.400 1255.800,366.900 1256.800,371.700 1257.800,376.600 1258.800,381.200 1259.800,385.200 1260.800,388.300 1261.800,390.200 1262.800,390.900 1263.800,390.400 1264.800,388.500 1265.800,385.500 1266.800,381.600 1267.800,377 1268.800,372.100 1269.800,367.200 1270.800,362.600 1271.800,358.700 1272.800,355.800 1273.800,354.100 1274.800,353.700 1275.800,354.600 1276.800,356.800 1277.800,360.100 1278.800,364.300 1279.800,369.100 1280.800,374.100 1281.800,379 1282.800,383.400 1283.800,387 1284.800,389.500 1285.800,390.800 1286.800,390.800 1287.800,389.400 1288.800,386.900 1289.800,383.300 1290.800,378.900 1291.800,374.100 1292.800,369.200 1293.800,364.500 1294.800,360.400 1295.800,357.100 1296.800,354.800 1297.800,353.700 1298.800,353.900 1299.800,355.400 1300.800,358 1301.800,361.600 1302.800,365.900 1303.800,370.700 1304.800,375.500 1305.800,380.200 1306.800,384.300 1307.800,387.600 1308.800,389.800 1309.800,390.900 1310.800,390.700 1311.800,389.200 1312.800,386.500 1313.800,382.900 1314.800,378.500 1315.800,373.700 1316.800,368.800" fill="none" stroke="#0f0" stroke-width="1.35" stroke-linejoin="round" shape-rendering="crispEdges" />
<path d="M92 508.500H672.500V606.500H1317" fill="none" stroke="#f00" stroke-width="1" shape-rendering="crispEdges"/>
<polyline points="93,505.600 93.500,504.300 94,504.300 94.500,504.300 95,507.600 95.500,507.600 96,507.600 96.500,506.300 97,506.300 97.500,506.300 98,505.600 98.500,505.600 99,505.600 99.500,505.600 100,505.600 100.500,505.600 101,505.600 101.500,505.600 102,505.600 102.500,505.600 103,504.700 103.500,504.700 104,504.700 104.500,506.600 105,506.600 105.500,506.600 106,505.600 106.500,505.600 107,505.600 107.500,505.600 108,505.600 108.500,505.600 109,505.600 109.500,505.600 110,505.600 110.500,504.300 111,506.300 111.500,506.300 112,509.600 112.500,509.600 113,509.600 113.500,508.300 114,508.300 114.500,508.300 115,507.600 115.500,507.600 116,507.600 116.500,507.600 117,507.600 117.500,507.600 118,507.600 118.500,507.600 119,507.600 119.500,507.600 120,506.700 120.500,506.700 121,506.700 121.500,508.600 122,508.600 122.500,508.600 123,507.600 123.500,507.600 124,507.600 124.500,507.600 125,507.600 125.500,507.600 126,507.600 126.500,507.600 127,507.600 127.500,506.300 128,506.300 128.500,506.300 129,509.600 129.500,509.600 130,509.600 130.500,508.300 131,508.300 131.500,508.300 132,508.300 132.500,507.600 133,507.600 133.500,507.600 134,507.600 134.500,507.600 135,507.600 135.500,507.600 136,507.600 136.500,507.600 137,507.600 137.500,506.700 138,506.700 138.500,508.600 139,508.600 139.500,508.600 140,507.600 140.500,507.600 141,507.600 141.500,507.600 142,507.600 142.500,507.600 143,507.600 143.500,507.600 144,507.600 144.500,506.300 145,506.300 145.500,506.300 146,509.600 146.500,509.600 147,509.600 147.500,509.600 148,508.300 148.500,508.300 149,508.300 149.500,507.600 150,507.600 150.500,507.600 151,507.600 151.500,507.600 152,507.600 152.500,507.600 153,507.600 153.500,507.600 154,507.600 154.500,506.700 155,506.700 155.500,506.700 156,508.600 156.500,508.600 157,507.600 157.500,507.600 158,507.600 158.500,507.600 159,507.600 159.500,507.600 160,507.600 160.500,507.600 161,507.600 161.500,507.600 162,506.300 162.500,506.300 163,506.300 163.500,509.600 164,509.600 164.500,509.600 165,508.300 165.500,508.300 166,508.300 166.500,507.600 167,507.600 167.500,507.600 168,507.600 168.500,507.600 169,507.600 169.500,507.600 170,507.600 170.500,507.600 171,507.600 171.500,506.700 172,506.700 172.500,506.700 173,508.600 173.500,508.600 174,508.600 174.500,507.600 175,507.600 175.500,507.600 176,507.600 176.500,507.600 177,507.600 177.500,507.600 178,507.600 178.500,507.600 179,506.300 179.500,506.300 180,506.300 180.500,509.600 181,509.600 181.500,509.600 182,508.300 182.500,508.300 183,508.300 183.500,507.600 184,507.600 184.500,507.600 185,507.600 185.500,507.600 186,507.600 186.500,507.600 187,507.600 187.500,507.600 188,507.600 188.500,506.700 189,506.700 189.500,506.700 190,508.600 190.500,508.600 191,508.600 191.500,507.600 192,507.600 192.500,507.600 193,507.600 193.500,507.600 194,507.600 194.500,507.600 195,507.600 195.500,507.600 196,506.300 196.500,506.300 197,506.300 197.500,509.600 198,509.600 198.500,509.600 199,508.300 199.500,508.300 200,508.300 200.500,508.300 201,507.600 201.500,507.600 202,507.600 202.500,507.600 203,507.600 203.500,507.600 204,507.600 204.500,507.600 205,507.600 205.500,507.600 206,506.700 206.500,506.700 207,508.600 207.500,508.600 208,508.600 208.500,507.600 209,507.600 209.500,507.600 210,507.600 210.500,507.600 211,507.600 211.500,507.600 212,507.600 212.500,507.600 213,506.300 213.500,506.300 214,506.300 214.500,509.600 215,509.600 215.500,509.600 216,509.600 216.500,508.300 217,508.300 217.500,508.300 218,507.600 218.500,507.600 219,507.600 219.500,507.600 220,507.600 220.500,507.600 221,507.600 221.500,507.600 222,507.600 222.500,507.600 223,506.700 223.500,506.700 224,506.700 224.500,508.600 225,508.600 225.500,507.600 226,507.600 226.500,507.600 227,507.600 227.500,507.600 228,507.600 228.500,507.600 229,507.600 229.500,507.600 230,507.600 230.500,506.300 231,506.300 231.500,506.300 232,509.600 232.500,509.600 233,509.600 233.500,508.300 234,508.300 234.500,508.300 235,507.600 235.500,507.600 236,507.600 236.500,507.600 237,507.600 237.500,507.600 238,507.600 238.500,507.600 239,507.600 239.500,507.600 240,506.700 240.500,506.700 241,506.700 241.500,508.600 242,508.600 242.500,508.600 243,507.600 243.500,507.600 244,507.600 244.500,507.600 245,507.600 245.500,507.600 246,507.600 246.500,507.600 247,507.600 247.500,506.300 248,506.300 248.500,506.300 249,509.600 249.500,509.600 250,509.600 250.500,508.300 251,508.300 251.500,508.300 252,507.600 252.500,507.600 253,507.600 253.500,507.600 254,507.600 254.500,507.600 255,507.600 255.500,507.600 256,507.600 256.500,507.600 257,506.700 257.500,506.700 258,506.700 258.500,508.600 259,508.600 259.500,508.600 260,507.600 260.500,507.600 261,507.600 261.500,507.600 262,507.600 262.500,507.600 263,507.600 263.500,507.600 264,507.600 264.500,506.300 265,506.300 265.500,506.300 266,509.600 266.500,509.600 267,509.600 267.500,508.300 268,508.300 268.500,508.300 269,507.600 269.500,507.600 270,507.600 270.500,507.600 271,507.600 271.500,507.600 272,507.600 272.500,507.600 273,507.600 273.500,507.600 274,506.700 274.500,506.700 275,506.700 275.500,508.600 276,508.600 276.500,508.600 277,507.600 277.500,507.600 278,507.600 278.500,507.600 279,507.600 279.500,507.600 280,507.600 280.500,507.600 281,507.600 281.500,506.300 282,506.300 282.500,506.300 283,509.600 283.500,509.600 284,509.600 284.500,508.300 285,508.300 285.500,508.300 286,508.300 286.500,507.600 287,507.600 287.500,507.600 288,507.600 288.500,507.600 289,507.600 289.500,507.600 290,507.600 290.500,507.600 291,507.600 291.500,506.700 292,506.700 292.500,508.600 293,508.600 293.500,508.600 294,507.600 294.500,507.600 295,507.600 295.500,507.600 296,507.600 296.500,507.600 297,507.600 297.500,507.600 298,507.600 298.500,506.300 299,506.300 299.500,506.300 300,509.600 300.500,509.600 301,509.600 301.500,509.600 302,508.300 302.500,508.300 303,508.300 303.500,507.600 304,507.600 304.500,507.600 305,507.600 305.500,507.600 306,507.600 306.500,507.600 307,507.600 307.500,507.600 308,507.600 308.500,506.700 309,506.700 309.500,506.700 310,508.600 310.500,508.600 311,507.600 311.500,507.600 312,507.600 312.500,507.600 313,507.600 313.500,507.600 314,507.600 314.500,507.600 315,507.600 315.500,507.600 316,506.300 316.500,506.300 317,506.300 317.500,509.600 318,509.600 318.500,509.600 319,508.300 319.500,508.300 320,508.300 320.500,507.600 321,507.600 321.500,507.600 322,507.600 322.500,507.600 323,507.600 323.500,507.600 324,507.600 324.500,507.600 325,507.600 325.500,506.700 326,506.700 326.500,506.700 327,508.600 327.500,508.600 328,508.600 328.500,507.600 329,507.600 329.500,507.600 330,507.600 330.500,507.600 331,507.600 331.500,507.600 332,507.600 332.500,507.600 333,506.300 333.500,506.300 334,506.300 334.500,509.600 335,509.600 335.500,509.600 336,508.300 336.500,508.300 337,508.300 337.500,507.600 338,507.600 338.500,507.600 339,507.600 339.500,507.600 340,507.600 340.500,507.600 341,507.600 341.500,507.600 342,507.600 342.500,506.700 343,506.700 343.500,506.700 344,508.600 344.500,508.600 345,508.600 345.500,507.600 346,507.600 346.500,507.600 347,507.600 347.500,507.600 348,507.600 348.500,507.600 349,507.600 349.500,507.600 350,506.300 350.500,506.300 351,506.300 351.500,509.600 352,509.600 352.500,509.600 353,508.300 353.500,508.300 354,508.300 354.500,507.600 355,507.600 355.500,507.600 356,507.600 356.500,507.600 357,507.600 357.500,507.600 358,507.600 358.500,507.600 359,507.600 359.500,506.700 360,506.700 360.500,506.700 361,508.600 361.500,508.600 362,508.600 362.500,507.600 363,507.600 363.500,507.600 364,507.600 364.500,507.600 365,507.600 365.500,507.600 366,507.600 366.500,507.600 367,506.300 367.500,506.300 368,506.300 368.500,509.600 369,509.600 369.500,509.600 370,508.300 370.500,508.300 371,508.300 371.500,508.300 372,507.600 372.500,507.600 373,507.600 373.500,507.600 374,507.600 374.500,507.600 375,507.600 375.500,507.600 376,507.600 376.500,507.600 377,506.700 377.500,506.700 378,508.600 378.500,508.600 379,508.600 379.500,507.600 380,507.600 380.500,507.600 381,507.600 381.500,507.600 382,507.600 382.500,507.600 383,507.600 383.500,507.600 384,506.300 384.500,506.300 385,506.300 385.500,509.600 386,509.600 386.500,509.600 387,509.600 387.500,508.300 388,508.300 388.500,508.300 389,507.600 389.500,507.600 390,507.600 390.500,507.600 391,507.600 391.500,507.600 392,507.600 392.500,507.600 393,507.600 393.500,507.600 394,506.700 394.500,506.700 395,506.700 395.500,508.600 396,508.600 396.500,507.600 397,507.600 397.500,507.600 398,507.600 398.500,507.600 399,507.600 399.500,507.600 400,507.600 400.500,507.600 401,507.600 401.500,506.300 402,506.300 402.500,506.300 403,509.600 403.500,509.600 404,509.600 404.500,508.300 405,508.300 405.500,508.300 406,507.600 406.500,507.600 407,507.600 407.500,507.600 408,507.600 408.500,507.600 409,507.600 409.500,507.600 410,507.600 410.500,507.600 411,506.700 411.500,506.700 412,506.700 412.500,508.600 413,508.600 413.500,508.600 414,507.600 414.500,507.600 415,507.600 415.500,507.600 416,507.600 416.500,507.600 417,507.600 417.500,507.600 418,507.600 418.500,506.300 419,506.300 419.500,506.300 420,509.600 420.500,509.600 421,509.600 421.500,508.300 422,508.300 422.500,508.300 423,507.600 423.500,507.600 424,507.600 424.500,507.600 425,507.600 425.500,507.600 426,507.600 426.500,507.600 427,507.600 427.500,507.600 428,506.700 428.500,506.700 429,506.700 429.500,508.600 430,508.600 430.500,508.600 431,507.600 431.500,507.600 432,507.600 432.500,507.600 433,507.600 433.500,507.600 434,507.600 434.500,507.600 435,507.600 435.500,506.300 436,506.300 436.500,506.300 437,509.600 437.500,509.600 438,509.600 438.500,508.300 439,508.300 439.500,508.300 440,507.600 440.500,507.600 441,507.600 441.500,507.600 442,507.600 442.500,507.600 443,507.600 443.500,507.600 444,507.600 444.500,507.600 445,506.700 445.500,506.700 446,506.700 446.500,508.600 447,508.600 447.500,508.600 448,507.600 448.500,507.600 449,507.600 449.500,507.600 450,507.600 450.500,507.600 451,507.600 451.500,507.600 452,507.600 452.500,506.300 453,506.300 453.500,506.300 454,509.600 454.500,509.600 455,509.600 455.500,508.300 456,508.300 456.500,508.300 457,508.300 457.500,507.600 458,507.600 458.500,507.600 459,507.600 459.500,507.600 460,507.600 460.500,507.600 461,507.600 461.500,507.600 462,507.600 462.500,506.700 463,506.700 463.500,508.600 464,508.600 464.500,508.600 465,507.600 465.500,507.600 466,507.600 466.500,507.600 467,507.600 467.500,507.600 468,507.600 468.500,507.600 469,507.600 469.500,506.300 470,506.300 470.500,506.300 471,509.600 471.500,509.600 472,509.600 472.500,509.600 473,508.300 473.500,508.300 474,508.300 474.500,507.600 475,507.600 475.500,507.600 476,507.600 476.500,507.600 477,507.600 477.500,507.600 478,507.600 478.500,507.600 479,507.600 479.500,506.700 480,506.700 480.500,506.700 481,508.600 481.500,508.600 482,507.600 482.500,507.600 483,507.600 483.500,507.600 484,507.600 484.500,507.600 485,507.600 485.500,507.600 486,507.600 486.500,507.600 487,506.300 487.500,506.300 488,506.300 488.500,509.600 489,509.600 489.500,509.600 490,508.300 490.500,508.300 491,508.300 491.500,507.600 492,507.600 492.500,507.600 493,507.600 493.500,507.600 494,507.600 494.500,507.600 495,507.600 495.500,507.600 496,507.600 496.500,506.700 497,506.700 497.500,506.700 498,508.600 498.500,508.600 499,508.600 499.500,507.600 500,507.600 500.500,507.600 501,507.600 501.500,507.600 502,507.600 502.500,507.600 503,507.600 503.500,507.600 504,506.300 504.500,506.300 505,506.300 505.500,509.600 506,509.600 506.500,509.600 507,508.300 507.500,508.300 508,508.300 508.500,507.600 509,507.600 509.500,507.600 510,507.600 510.500,507.600 511,507.600 511.500,507.600 512,507.600 512.500,507.600 513,507.600 513.500,506.700 514,506.700 514.500,506.700 515,508.600 515.500,508.600 516,508.600 516.500,507.600 517,507.600 517.500,507.600 518,507.600 518.500,507.600 519,507.600 519.500,507.600 520,507.600 520.500,507.600 521,506.300 521.500,506.300 522,506.300 522.500,509.600 523,509.600 523.500,509.600 524,508.300 524.500,508.300 525,508.300 525.500,507.600 526,507.600 526.500,507.600 527,507.600 527.500,507.600 528,507.600 528.500,507.600 529,507.600 529.500,507.600 530,507.600 530.500,506.700 531,506.700 531.500,506.700 532,508.600 532.500,508.600 533,508.600 533.500,507.600 534,507.600 534.500,507.600 535,507.600 535.500,507.600 536,507.600 536.500,507.600 537,507.600 537.500,507.600 538,506.300 538.500,506.300 539,506.300 539.500,509.600 540,509.600 540.500,509.600 541,508.300 541.500,508.300 542,508.300 542.500,508.300 543,507.600 543.500,507.600 544,507.600 544.500,507.600 545,507.600 545.500,507.600 546,507.600 546.500,507.600 547,507.600 547.500,507.600 548,506.700 548.500,506.700 549,508.600 549.500,508.600 550,508.600 550.500,507.600 551,507.600 551.500,507.600 552,507.600 552.500,507.600 553,507.600 553.500,507.600 554,507.600 554.500,507.600 555,506.300 555.500,506.300 556,506.300 556.500,509.600 557,509.600 557.500,509.600 558,509.600 558.500,508.300 559,508.300 559.500,508.300 560,507.600 560.500,507.600 561,507.600 561.500,507.600 562,507.600 562.500,507.600 563,507.600 563.500,507.600 564,507.600 564.500,507.600 565,506.700 565.500,506.700 566,506.700 566.500,508.600 567,508.600 567.500,507.600 568,507.600 568.500,507.600 569,507.600 569.500,507.600 570,507.600 570.500,507.600 571,507.600 571.500,507.600 572,507.600 572.500,506.300 573,506.300 573.500,506.300 574,509.600 574.500,509.600 575,509.600 575.500,508.300 576,508.300 576.500,508.300 577,507.600 577.500,507.600 578,507.600 578.500,507.600 579,507.600 579.500,507.600 580,507.600 580.500,507.600 581,507.600 581.500,507.600 582,506.700 582.500,506.700 583,506.700 583.500,508.600 584,508.600 584.500,508.600 585,507.600 585.500,507.600 586,507.600 586.500,507.600 587,507.600 587.500,507.600 588,507.600 588.500,507.600 589,507.600 589.500,506.300 590,506.300 590.500,506.300 591,509.600 591.500,509.600 592,509.600 592.500,508.300 593,508.300 593.500,508.300 594,507.600 594.500,507.600 595,507.600 595.500,507.600 596,507.600 596.500,507.600 597,507.600 597.500,507.600 598,507.600 598.500,507.600 599,506.700 599.500,506.700 600,506.700 600.500,508.600 601,508.600 601.500,508.600 602,507.600 602.500,507.600 603,507.600 603.500,507.600 604,507.600 604.500,507.600 605,507.600 605.500,507.600 606,507.600 606.500,506.300 607,506.300 607.500,506.300 608,509.600 608.500,509.600 609,509.600 609.500,508.300 610,508.300 610.500,508.300 611,507.600 611.500,507.600 612,507.600 612.500,507.600 613,507.600 613.500,507.600 614,507.600 614.500,507.600 615,507.600 615.500,507.600 616,506.700 616.500,506.700 617,506.700 617.500,508.600 618,508.600 618.500,508.600 619,507.600 619.500,507.600 620,507.600 620.500,507.600 621,507.600 621.500,507.600 622,507.600 622.500,507.600 623,507.600 623.500,506.300 624,506.300 624.500,506.300 625,509.600 625.500,509.600 626,509.600 626.500,508.300 627,508.300 627.500,508.300 628,507.600 628.500,507.600 629,507.600 629.500,507.600 630,507.600 630.500,507.600 631,507.600 631.500,507.600 632,507.600 632.500,507.600 633,506.700 633.500,506.700 634,506.700 634.500,508.600 635,508.600 635.500,508.600 636,507.600 636.500,507.600 637,507.600 637.500,507.600 638,507.600 638.500,507.600 639,507.600 639.500,507.600 640,507.600 640.500,506.300 641,506.300 641.500,506.300 642,509.600 642.500,509.600 643,509.600 643.500,508.300 644,508.300 644.500,508.300 645,508.300 645.500,507.600 646,507.600 646.500,507.600 647,507.600 647.500,507.600 648,507.600 648.500,507.600 649,507.600 649.500,507.600 650,507.600 650.500,506.700 651,506.700 651.500,508.600 652,508.600 652.500,508.600 653,507.600 653.500,507.600 654,507.600 654.500,507.600 655,507.600 655.500,507.600 656,507.600 656.500,507.600 657,507.600 657.500,506.300 658,506.300 658.500,506.300 659,509.600 659.500,509.600 660,509.600 660.500,509.600 661,508.300 661.500,508.300 662,508.300 662.500,507.600 663,507.600 663.500,507.600 664,507.600 664.500,507.600 665,507.600 665.500,507.600 666,507.600 666.500,507.600 667,507.600 667.500,506.700 668,506.700 668.500,506.700 669,508.600 669.500,508.600 670,507.600 670.500,507.600 671,507.600 671.500,507.600 672,507.600 672.500,507.600 673,508.300 673.500,510" fill="none" stroke="#00f" stroke-width="3" stroke-linejoin="round" shape-rendering="crispEdges" />
<polyline points="673,508.300 673.500,510 674,511.800 674.500,513.600 675,515.400 675.500,517.200 676,519.100 676.500,521 677,522.900 677.500,524.800 678,526.600 678.500,528.300 679,530 679.500,531.900 680,534.400 680.500,537.700 681,541.500 681.500,545 682,548.200 682.500,551.300 683,554.300 683.500,557 684,559.500 684.500,561.800 685,564 685.500,566 686,567.900 686.500,569.700 687,571.400 687.500,573 688,574.500 688.500,575.800 689,577.100 689.500,578.200 690,579.300 690.500,580.200 691,581.200 691.500,582.100 692,583 692.500,583.800 693,584.700 693.500,585.500 694,586.300 694.500,587.100 695,587.800 695.500,588.500 696,589.100 696.500,589.700 697,590.300 697.500,590.900 698,591.500 698.500,592 699,592.400 699.500,592.900 700,593.200 700.500,593.600" fill="none" stroke="#00f" stroke-width="2.2" stroke-linejoin="round" shape-rendering="crispEdges" />
<polyline points="700,593.200 700.500,593.600 701,593.900 701.500,594.200 702,594.500 702.500,594.800 703,595 703.500,595.300 704,595.500 704.500,595.700 705,596 705.500,596.200 706,596.400 706.500,596.600 707,596.800 707.500,597 708,597.200 708.500,597.400 709,597.600 709.500,597.800 710,598 710.500,598.100 711,598.300 711.500,598.500 712,598.600 712.500,598.700 713,598.900 713.500,599 714,599.100 714.500,599.300 715,599.400 715.500,599.500 716,599.600 716.500,599.700 717,599.900 717.500,600 718,600.100 718.500,600.200 719,600.300 719.500,600.400 720,600.500 720.500,600.600 721,600.700 721.500,600.800 722,600.900 722.500,601 723,601.100 723.500,601.200 724,601.300 724.500,601.400 725,601.500 725.500,601.500 726,601.600 726.500,601.700 727,601.800 727.500,601.900 728,602 728.500,602 729,602.100 729.500,602.200 730,602.200 730.500,602.300 731,602.400 731.500,602.400 732,602.500 732.500,602.600 733,602.600 733.500,602.700 734,602.700 734.500,602.800 735,602.900 735.500,602.900 736,603 736.500,603 737,603.100 737.500,603.100 738,603.200 738.500,603.200 739,603.300 739.500,603.300 740,603.400 740.500,603.400 741,603.500 741.500,603.600 742,603.600 742.500,603.700 743,603.700 743.500,603.800 744,603.800 744.500,603.800 745,603.900 745.500,603.900 746,604 746.500,604 747,604.100 747.500,604.100 748,604.200 748.500,604.200 749,604.300 749.500,604.300 750,604.300 750.500,604.400 751,604.400 751.500,604.500 752,604.500 752.500,604.500 753,604.600 753.500,604.600 754,604.700 754.500,604.700 755,604.700 755.500,604.800 756,604.800" fill="none" stroke="#00f" stroke-width="3" stroke-linejoin="round" shape-rendering="crispEdges" />
<rect x="750" y="603" width="567" height="4" fill="#00f" shape-rendering="crispEdges"/>
<path d="M769 606.500H1317" stroke="#f00" stroke-width="1" stroke-dasharray="2 2" shape-rendering="crispEdges"/>
<rect x="1311" y="89" width="6" height="6" fill="#f00" shape-rendering="crispEdges"/>
<rect x="592.100" y="103.900" width="264.800" height="570.900" rx="1.800" fill="none" stroke="#ff1408" stroke-width="3.500"/>
<text x="365.500" y="155.500" font-size="21" fill="#ff1a0a" font-family="'Liberation Sans','Noto Sans CJK SC',sans-serif">母线电压</text>
<text x="181.500" y="316.600" font-size="21.600" fill="#ff1a0a" font-family="'Liberation Sans','Noto Sans CJK SC',sans-serif">电机电流</text>
<text x="643" y="463.300" font-size="20.900" fill="#ff1a0a" font-family="'Liberation Sans','Noto Sans CJK SC',sans-serif">电机输出扭矩突变</text>
<text x="187" y="547.600" font-size="21" fill="#ff1a0a" font-family="'Liberation Sans','Noto Sans CJK SC',sans-serif">电机输出扭矩</text>
</svg>
<span class="t ax" style="left:61.99px;top:110.00px;font-size:9.9px;color:#000;transform:scaleX(1.1120)">362</span>
<span class="t ax" style="left:61.97px;top:142.00px;font-size:9.9px;color:#000;transform:scaleX(1.1119)">361</span>
<span class="t ax" style="left:61.87px;top:174.00px;font-size:9.9px;color:#000;transform:scaleX(1.1117)">360</span>
<span class="t ax" style="left:61.96px;top:206.00px;font-size:9.9px;color:#000;transform:scaleX(1.1119)">359</span>
<span class="t ax" style="left:61.91px;top:238.00px;font-size:9.9px;color:#000;transform:scaleX(1.1118)">358</span>
<span class="t ax" style="left:67.80px;top:295.00px;font-size:9.9px;color:#000;transform:scaleX(1.1294)">20</span>
<span class="t ax" style="left:67.82px;top:313.00px;font-size:9.9px;color:#000;transform:scaleX(1.1308)">15</span>
<span class="t ax" style="left:67.79px;top:332.00px;font-size:9.9px;color:#000;transform:scaleX(1.1307)">10</span>
<span class="t ax" style="left:73.76px;top:350.00px;font-size:9.9px;color:#000;transform:scaleX(1.1865)">5</span>
<span class="t ax" style="left:73.73px;top:368.00px;font-size:9.9px;color:#000;transform:scaleX(1.1857)">0</span>
<span class="t ax" style="left:70.21px;top:386.00px;font-size:9.9px;color:#000;transform:scaleX(1.1429)">-5</span>
<span class="t ax" style="left:64.25px;top:405.00px;font-size:9.9px;color:#000;transform:scaleX(1.1171)">-10</span>
<span class="t ax" style="left:64.28px;top:423.00px;font-size:9.9px;color:#000;transform:scaleX(1.1172)">-15</span>
<span class="t ax" style="left:73.81px;top:480.00px;font-size:9.9px;color:#000;transform:scaleX(1.1893)">9</span>
<span class="t ax" style="left:73.77px;top:504.00px;font-size:9.9px;color:#000;transform:scaleX(1.1876)">8</span>
<span class="t ax" style="left:73.83px;top:529.00px;font-size:9.9px;color:#000;transform:scaleX(1.1911)">7</span>
<span class="t ax" style="left:73.77px;top:553.00px;font-size:9.9px;color:#000;transform:scaleX(1.1895)">6</span>
<span class="t ax" style="left:73.76px;top:578.00px;font-size:9.9px;color:#000;transform:scaleX(1.1865)">5</span>
<span class="t ax" style="left:73.64px;top:602.00px;font-size:9.9px;color:#000;transform:scaleX(1.1802)">4</span>
<span class="t ax" style="left:277.96px;top:626.00px;font-size:9.9px;color:#000;transform:scaleX(1.1188)">0.2</span>
<span class="t ax" style="left:535.85px;top:626.00px;font-size:9.9px;color:#000;transform:scaleX(1.1182)">0.4</span>
<span class="t ax" style="left:793.93px;top:626.00px;font-size:9.9px;color:#000;transform:scaleX(1.1186)">0.6</span>
<span class="t ax" style="left:1051.93px;top:626.00px;font-size:9.9px;color:#000;transform:scaleX(1.1186)">0.8</span>
<span class="t ax" style="left:1310.96px;top:626.00px;font-size:9.9px;color:#000;transform:scaleX(0.8434)">1</span>
<span class="t ax" style="left:685.97px;top:640.20px;font-size:9.9px;color:#000;transform:scaleX(1.0463)">Time (s)</span>
<span class="t ax" style="left:92.16px;top:84.20px;font-size:9.9px;color:#f00;transform:scaleX(1.0242)">Vbus</span>
<span class="t ax" style="left:91.81px;top:269.00px;font-size:9.9px;color:#f00;transform:scaleX(1.0363)">Oa</span>
<span class="t ax" style="left:135.90px;top:269.00px;font-size:9.9px;color:#00f;transform:scaleX(1.0713)">Ob</span>
<span class="t ax" style="left:179.89px;top:269.00px;font-size:9.9px;color:#0f0;transform:scaleX(1.0905)">Oc</span>
<span class="t ax" style="left:92.26px;top:454.10px;font-size:9.9px;color:#f00;transform:scaleX(1.0893)">Tem_cmd</span>
<span class="t ax" style="left:170.56px;top:454.10px;font-size:9.9px;color:#00f;transform:scaleX(1.0950)">Tem_PMSM</span>
<svg id="bticons" width="1366" height="746" viewBox="0 0 1366 746">
<path d="M2 692h1v1h-1zM3 691h1v1h-1zM3 692h1v1h-1z" fill="#bcbcbc" shape-rendering="crispEdges"/>
<path d="M2 697h1v1h-1zM3 696h1v1h-1zM3 697h1v1h-1z" fill="#bcbcbc" shape-rendering="crispEdges"/>
<path d="M2 702h1v1h-1zM3 701h1v1h-1zM3 702h1v1h-1z" fill="#bcbcbc" shape-rendering="crispEdges"/>
<path d="M2 707h1v1h-1zM3 706h1v1h-1zM3 707h1v1h-1z" fill="#bcbcbc" shape-rendering="crispEdges"/>
<path d="M2 712h1v1h-1zM3 711h1v1h-1zM3 712h1v1h-1z" fill="#bcbcbc" shape-rendering="crispEdges"/>
<g shape-rendering="crispEdges">
<rect x="7" y="692" width="239" height="24" fill="#fff"/>
<rect x="7" y="692" width="238" height="23" fill="#a0a0a0"/>
<rect x="8" y="693" width="237" height="22" fill="#696969"/>
<rect x="9" y="694" width="236" height="21" fill="#e3e3e3"/>
<rect x="9" y="694" width="235" height="20" fill="#fff"/>
<rect x="228" y="694" width="16" height="20" fill="#696969"/>
<rect x="228" y="694" width="15" height="19" fill="#e3e3e3"/>
<rect x="229" y="695" width="14" height="18" fill="#a0a0a0"/>
<rect x="229" y="695" width="13" height="17" fill="#fff"/>
<rect x="230" y="696" width="12" height="16" fill="#f0f0f0"/>
<path d="M233 702h7v1h-1v1h-1v1h-1v1h-1v-1h-1v-1h-1v-1h-1z" fill="#000"/>
</g>
<rect x="275" y="691" width="1" height="24" fill="#a0a0a0" shape-rendering="crispEdges"/>
<rect x="385" y="691" width="1" height="24" fill="#a0a0a0" shape-rendering="crispEdges"/>
<rect x="469" y="691" width="1" height="24" fill="#a0a0a0" shape-rendering="crispEdges"/>
<rect x="527" y="691" width="1" height="24" fill="#a0a0a0" shape-rendering="crispEdges"/>
<path d="M257.500 691V714M250 698.500H269" stroke="#f00" stroke-width="1" stroke-dasharray="1 1" shape-rendering="crispEdges" fill="none"/>
<path d="M250.300 702.800C252 697.500 255 694.500 257.500 698.500C260 703 262.500 709.500 265 708.500C267 707.500 268 705 269 702" stroke="#000" stroke-width="1.2" fill="none"/>
<path d="M291.500 692V714M283 697.500H301" stroke="#f00" stroke-width="1" stroke-dasharray="1 1" shape-rendering="crispEdges" fill="none"/>
<path d="M284.300 710C284.300 702 287.500 697.500 291.500 697.500C295.500 697.500 298.700 702 298.700 710" stroke="#000" stroke-width="1.2" fill="none"/>
<path d="M321.500 692V714M308 699.500H327" stroke="#f00" stroke-width="1" stroke-dasharray="1 1" shape-rendering="crispEdges" fill="none"/>
<path d="M308.500 709C309.500 703 311 696.500 313.500 696.500C316 696.500 316.500 703 318.500 703C320.500 703 320.500 699.500 322.500 699.500C324.500 699.500 325.500 704 326.500 708" stroke="#000" stroke-width="1.2" fill="none"/>
<path d="M343.500 694V714M335 709.500H353" stroke="#f00" stroke-width="1" stroke-dasharray="1 1" shape-rendering="crispEdges" fill="none"/>
<path d="M336.500 697.500C336.500 705 339.500 709.500 343.500 709.500C347.500 709.500 350.500 705 350.500 697.500" stroke="#000" stroke-width="1.2" fill="none"/>
<path d="M373.500 692V714M360 705.500H379" stroke="#f00" stroke-width="1" stroke-dasharray="1 1" shape-rendering="crispEdges" fill="none"/>
<path d="M360.500 697.500C361.500 703 362.500 709.500 365 709.500C367.500 709.500 368 703.500 370 703.500C372 703.500 372 706 374 705.500C376 705 377.500 701 378.500 697.500" stroke="#000" stroke-width="1.2" fill="none"/>
<path d="M397.500 697.500H405.500M453 697.500H458" stroke="#000" stroke-width="1" shape-rendering="crispEdges"/>
<path d="M448.500 701V708M458.500 701V708" stroke="#000" stroke-width="1" shape-rendering="crispEdges"/>
<path d="M479 701h8v-4l6.300 6l-6.300 6v-4h-8z" fill="#000"/>
<path d="M518 701h-8v-4l-6.300 6l6.300 6v-4h8z" fill="#000"/>
</svg>
<span class="t" style="left:10.75px;top:696.90px;font-size:13.4px;color:#000;transform:scaleX(1.0025);font-weight:bold">1 -&gt; Vbus</span>
<span class="t" style="left:398.37px;top:696.20px;font-size:12.5px;color:#000;transform:scaleX(1.1410);font-family:'Liberation Serif',serif;font-style:italic">x</span>
<span class="t" style="left:418.44px;top:694.60px;font-size:13px;color:#000;transform:scaleX(0.9856);font-family:'Liberation Serif',serif">rms</span>
<span class="t" style="left:450.37px;top:696.60px;font-size:12.5px;color:#000;transform:scaleX(1.1410);font-family:'Liberation Serif',serif;font-style:italic">x</span>
<span class="t" style="left:536.81px;top:696.80px;font-size:10.6px;color:#000;transform:scaleX(0.9142)">PF</span>
<span class="t" style="left:564.69px;top:694.50px;font-size:13.2px;color:#000;transform:scaleX(1.0308);font-weight:bold">P</span>
<span class="t" style="left:591.42px;top:694.60px;font-size:13.2px;color:#000;transform:scaleX(0.9989);font-weight:bold">S</span>
<span class="t" style="left:611.99px;top:697.00px;font-size:11.2px;color:#000;transform:scaleX(0.8367)">THD</span>
<div class="b" id="ime" style="left:1111px;top:706px;width:253px;height:30px;background:#fff;border:1px solid #dedede;border-radius:7px;box-shadow:0 0 3px rgba(0,0,0,.12)"></div>
<svg width="1366" height="746" viewBox="0 0 1366 746">
<defs><linearGradient id="tg" x1="0" y1="0" x2="0.500" y2="1"><stop offset="0" stop-color="#ff5a36"/><stop offset=".45" stop-color="#b45cf0"/><stop offset="1" stop-color="#3fa9ff"/></linearGradient></defs>
<path d="M1137.400 716.200C1131 714.300 1122.300 716.800 1122.900 720.100C1123.500 723.200 1138.200 721.400 1137.800 725.100C1137.400 728.300 1129 728.900 1123.200 727.900" fill="none" stroke="#ff6a0a" stroke-width="3.300"/>
<rect x="1148" y="713" width="1" height="18" fill="#d0d0d0"/>
<text x="1157.800" y="728.600" font-size="17" font-weight="bold" fill="#000" font-family="'Liberation Sans','Noto Sans CJK SC',sans-serif">中</text>
<circle cx="1191.200" cy="718.300" r="2.100" fill="none" stroke="#000" stroke-width="1.300"/>
<path d="M1194.700 723.200h2.800v2.600c0 1.800-1 3.100-2.800 3.800l-.6-1.100c1-.5 1.600-1.200 1.700-2.200h-1.100z" fill="#000"/>
<rect x="1217.700" y="714.900" width="7.600" height="11" rx="3.800" fill="none" stroke="#000" stroke-width="1.500"/>
<path d="M1214.900 722.500c0 4 3 6.100 6.600 6.100s6.600-2.100 6.600-6.100M1221.500 728.600v2.300" fill="none" stroke="#000" stroke-width="1.500"/>
<rect x="1245.800" y="715.700" width="14.200" height="13.300" rx="1.800" fill="none" stroke="#000" stroke-width="1.600"/>
<path d="M1249.300 719.600h1.500M1252.200 719.600h1.500M1255.100 719.600h1.500M1249.300 722.200h1.500M1252.200 722.200h1.500M1255.100 722.200h1.500M1249.300 725.600h7.300" stroke="#000" stroke-width="1.200" fill="none"/>
<path d="M1277 718.600l3.400-2.400c1.600 1.600 5 1.600 6.600 0l3.900 2.400l-1.600 3.600l-1.900-.9v6.100c0 .9-.6 1.500-1.500 1.500h-4.800c-.9 0-1.500-.6-1.500-1.500v-6.100l-1.900.9z" fill="url(#tg)"/>
<circle cx="1292" cy="714" r="3" fill="#ff4a2a"/>
<rect x="1308" y="715" width="5.600" height="5.600" rx=".8" fill="none" stroke="#000" stroke-width="1.500"/>
<circle cx="1319.400" cy="717.800" r="2.900" fill="none" stroke="#000" stroke-width="1.500"/>
<rect x="1308" y="723.400" width="5.600" height="5.600" rx=".8" fill="none" stroke="#000" stroke-width="1.500"/>
<rect x="1316.600" y="723.400" width="5.600" height="5.600" rx=".8" fill="none" stroke="#000" stroke-width="1.500"/>
<circle cx="1346" cy="721.600" r="9.600" fill="#fff" stroke="#f3dede" stroke-width="1"/>
<path d="M1339 714l2.500-2l3 1.500l3.500-1.500l2.500 2.200" fill="none" stroke="#e9e4f5" stroke-width="1.200"/>
<path d="M1338.200 719.200l12.600-1.800l.8 4.200l-5.200 1.200l-1.600-1.400l-1.800 2.200l-4.600 .2z" fill="#f26a1b"/>
<path d="M1340.500 724.200c1.500 1.400 4 1.400 5.500-.2" stroke="#222" stroke-width="1.500" fill="none"/>
<path d="M1348 726.500l1.600-2.300" stroke="#222" stroke-width="1.200"/>
<path d="M1354.400 715.600l1.200 2.600l2.600 1.200l-2.600 1.200l-1.200 2.600l-1.200-2.600l-2.600-1.200l2.600-1.200z" fill="#ffd93b"/>
</svg>
<svg width="1366" height="746" viewBox="0 0 1366 746">
<circle cx="1252" cy="753" r="10" fill="none" stroke="#19c75a" stroke-width="2"/>
<rect x="1325" y="744.500" width="16" height="2" fill="#eee"/>
<rect x="1361" y="738" width="1" height="8" fill="#7a7a7a"/>
<rect x="161" y="744.700" width="13" height="1.500" fill="#2d8fe0"/><rect x="198" y="744.700" width="13" height="1.500" fill="#d92c3a"/>
<rect x="233" y="744.500" width="17" height="1.500" fill="#0000e6"/><rect x="270" y="744.500" width="16" height="1.500" fill="#0000e6"/>
<rect x="1164" y="745" width="4" height="1" fill="#19c75a"/><rect x="1219" y="745" width="3" height="1" fill="#ff6a0a"/><rect x="20" y="745.300" width="6" height="1" fill="#ddd"/><rect x="55" y="745.300" width="7" height="1" fill="#8fd14f"/>
</svg>
</div></body></html>
